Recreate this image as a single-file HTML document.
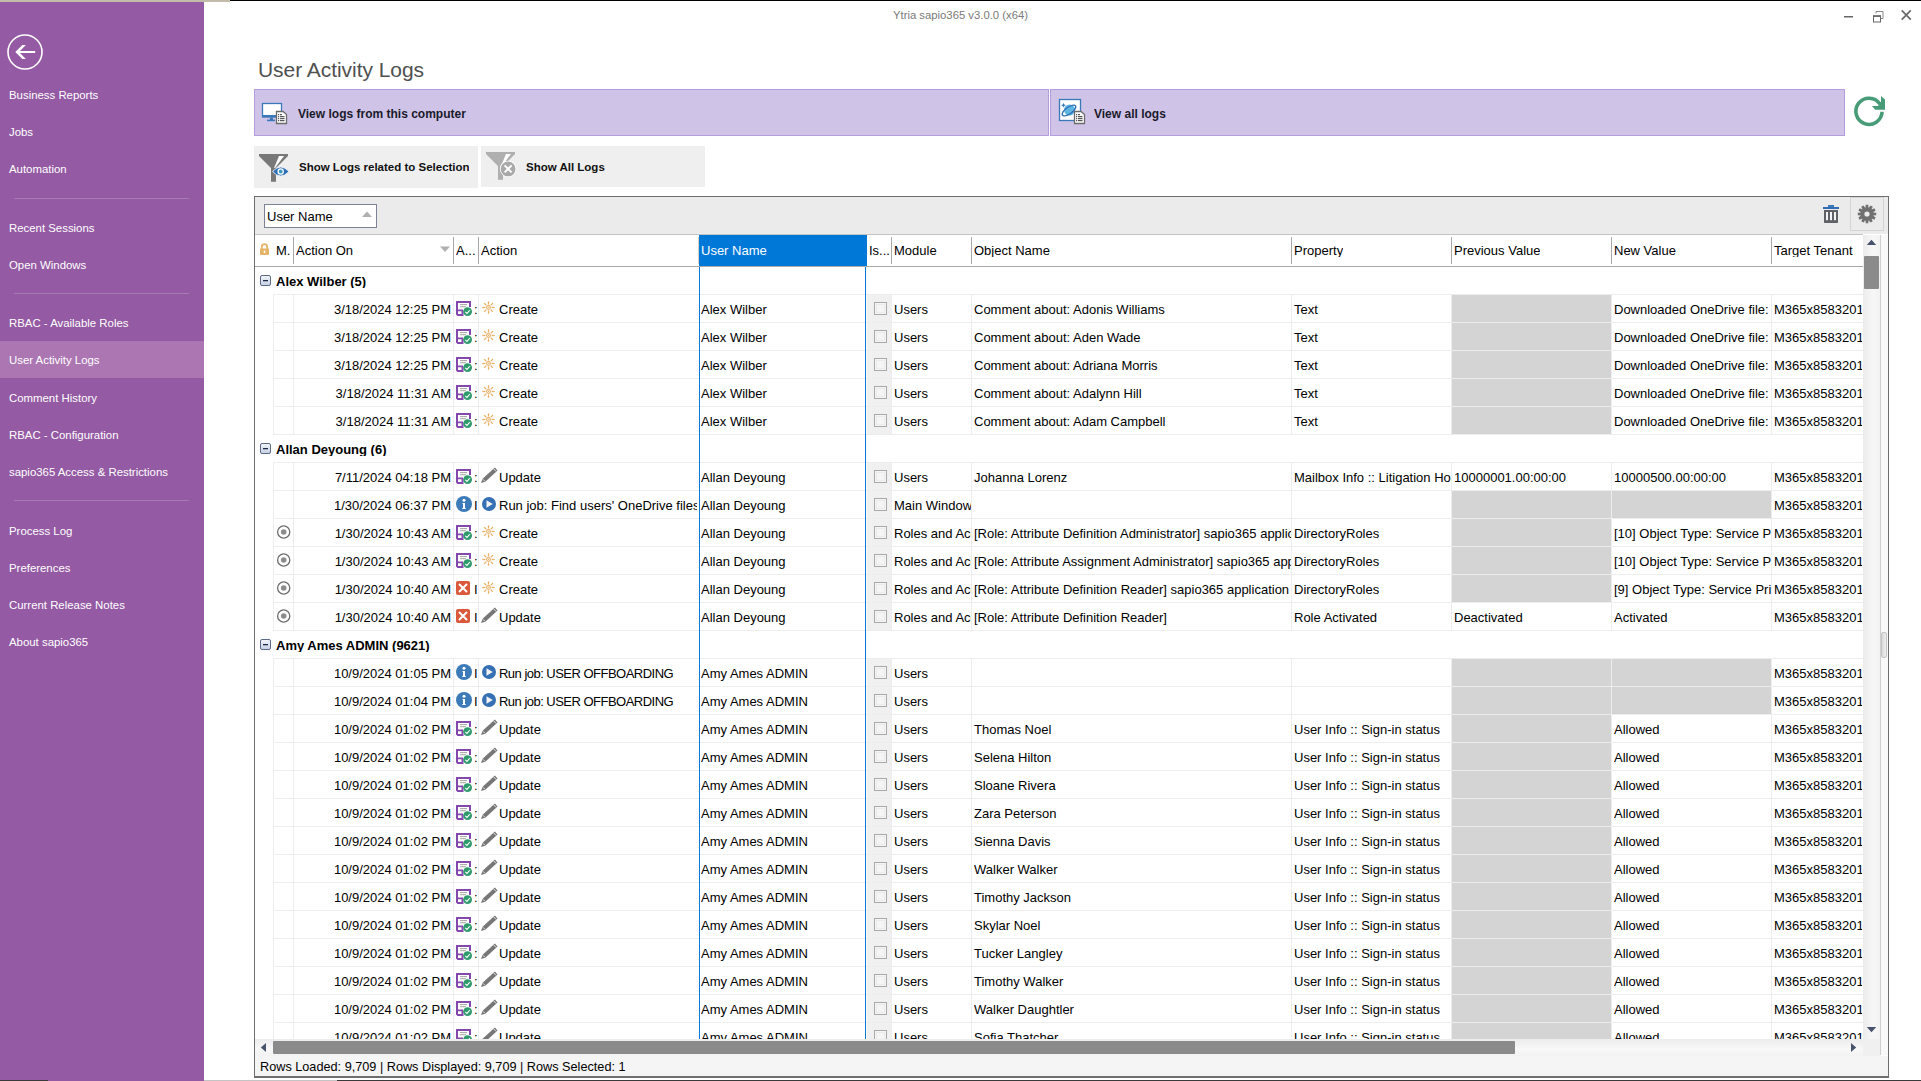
<!DOCTYPE html><html><head><meta charset="utf-8"><style>
*{margin:0;padding:0;box-sizing:border-box}
html,body{width:1921px;height:1081px;overflow:hidden;background:#fff;font-family:"Liberation Sans",sans-serif;position:relative}
.ab{position:absolute}
.t{position:absolute;white-space:nowrap;line-height:1}
.side{position:absolute;left:0;top:2px;width:204px;height:1079px;background:#945aa3}
.si{position:absolute;left:9px;color:#fff;font-size:11.4px;white-space:nowrap;line-height:1}
.sep{position:absolute;left:14px;width:175px;height:1px;background:#a57bb4}
.g{position:absolute;white-space:nowrap;line-height:1;font-size:13px;color:#000;overflow:hidden}
</style></head><body>

<div class="ab" style="left:0;top:0;width:230px;height:2px;background:#c2bba9"></div>
<div class="ab" style="left:230px;top:0;width:1691px;height:1px;background:#000"></div>
<div class="side"></div>
<div class="ab" style="left:0;top:341px;width:204px;height:37px;background:#ab76b2"></div>
<div class="si" style="top:90px">Business Reports</div>
<div class="si" style="top:127px">Jobs</div>
<div class="si" style="top:164px">Automation</div>
<div class="si" style="top:223px">Recent Sessions</div>
<div class="si" style="top:260px">Open Windows</div>
<div class="si" style="top:318px">RBAC - Available Roles</div>
<div class="si" style="top:355px">User Activity Logs</div>
<div class="si" style="top:393px">Comment History</div>
<div class="si" style="top:430px">RBAC - Configuration</div>
<div class="si" style="top:467px">sapio365 Access &amp; Restrictions</div>
<div class="si" style="top:526px">Process Log</div>
<div class="si" style="top:563px">Preferences</div>
<div class="si" style="top:600px">Current Release Notes</div>
<div class="si" style="top:637px">About sapio365</div>
<div class="sep" style="top:198px"></div>
<div class="sep" style="top:293px"></div>
<div class="sep" style="top:500px"></div>
<svg class="ab" style="left:7px;top:34px" width="36" height="36" viewBox="0 0 36 36"><circle cx="18" cy="18" r="17" fill="none" stroke="#fff" stroke-width="1.6"/><path d="M8.3 18 L15.4 11.1 H18.9 L13 17 H28.2 V19 H13 L18.9 24.9 H15.4 Z" fill="#fff"/></svg>
<div class="t" style="left:893px;top:10px;font-size:11.3px;color:#7a7a7a">Ytria sapio365 v3.0.0 (x64)</div>
<svg class="ab" style="left:1840px;top:6px" width="81" height="20"><rect x="4" y="10" width="9" height="1.5" fill="#666"/>
<rect x="33.5" y="10" width="7" height="6" fill="none" stroke="#666" stroke-width="1"/><rect x="33" y="9.3" width="8" height="1.6" fill="#666"/><path d="M36 7.5 V5.5 H43 V12.5 H41" fill="none" stroke="#888" stroke-width="1"/>
<path d="M61.7 4.3 L70.8 13.6 M70.8 4.3 L61.7 13.6" stroke="#6a6a6a" stroke-width="1.7"/></svg>
<div class="t" style="left:258px;top:59px;font-size:21px;letter-spacing:-0.05px;color:#505050">User Activity Logs</div>
<div class="ab" style="left:254px;top:89px;width:795px;height:47px;background:#cfc4e8;border:1px solid #b49ddc"></div>
<div class="ab" style="left:1050px;top:89px;width:795px;height:47px;background:#cfc4e8;border:1px solid #b49ddc"></div>
<svg class="ab" style="left:0;top:0;overflow:visible" width="1" height="1"><rect x="262.5" y="103.5" width="19" height="13" fill="#fff" stroke="#3a78b8" stroke-width="1.3"/><rect x="262" y="115" width="20" height="2.6" fill="#3a78b8"/><rect x="270" y="117.5" width="3" height="2.5" fill="#3a78b8"/><rect x="267" y="119.6" width="8" height="1.6" fill="#3a78b8"/><path d="M276.5 111.5 H283 L286.5 114.5 V123.5 H276.5 Z" fill="#fff" stroke="#6b6b6b" stroke-width="1.3"/><rect x="278" y="114" width="1.2" height="1.2" fill="#555"/><rect x="280" y="114" width="2" height="1.2" fill="#555"/><rect x="278" y="116" width="1.2" height="1.2" fill="#555"/><rect x="280" y="116" width="4.5" height="1.2" fill="#555"/><rect x="278" y="118" width="1.2" height="1.2" fill="#555"/><rect x="280" y="118" width="4.5" height="1.2" fill="#555"/><rect x="278" y="120" width="1.2" height="1.2" fill="#555"/><rect x="280" y="120" width="4.5" height="1.2" fill="#555"/><rect x="1059.5" y="99.5" width="21" height="21" fill="#fff" stroke="#3a78b8" stroke-width="1.3"/><circle cx="1069.5" cy="110" r="5.5" fill="#5db5e0"/><ellipse cx="1069" cy="110.5" rx="8" ry="3.3" transform="rotate(-35 1069 110.5)" fill="none" stroke="#3070b8" stroke-width="1.4"/><path d="M1063.5 103 l0.8 1.5 1.5 0.8 -1.5 0.8 -0.8 1.5 -0.8 -1.5 -1.5 -0.8 1.5 -0.8z" fill="#3a78b8"/><path d="M1074.5 111.5 H1081 L1084.5 114.5 V123.5 H1074.5 Z" fill="#fff" stroke="#6b6b6b" stroke-width="1.3"/><rect x="1076" y="114" width="1.2" height="1.2" fill="#555"/><rect x="1078" y="114" width="2" height="1.2" fill="#555"/><rect x="1076" y="116" width="1.2" height="1.2" fill="#555"/><rect x="1078" y="116" width="4.5" height="1.2" fill="#555"/><rect x="1076" y="118" width="1.2" height="1.2" fill="#555"/><rect x="1078" y="118" width="4.5" height="1.2" fill="#555"/><rect x="1076" y="120" width="1.2" height="1.2" fill="#555"/><rect x="1078" y="120" width="4.5" height="1.2" fill="#555"/></svg>
<div class="t" style="left:298px;top:108px;font-size:12px;font-weight:bold;color:#1a1a2a">View logs from this computer</div>
<div class="t" style="left:1094px;top:108px;font-size:12px;font-weight:bold;color:#1a1a2a">View all logs</div>
<svg class="ab" style="left:1850px;top:92px" width="40" height="40"><path d="M32.1 19.8 A13.1 13.1 0 1 1 29.9 12" fill="none" stroke="#479c77" stroke-width="3.6"/><path d="M31 3.9 L35 7.4 V17.8 H25.2 L21.9 14.1 H28 L31 9.5 Z" fill="#479c77"/></svg>
<div class="ab" style="left:254px;top:146px;width:224px;height:42px;background:#efefef"></div>
<div class="ab" style="left:481px;top:146px;width:224px;height:41px;background:#efefef"></div>
<svg class="ab" style="left:0;top:0;overflow:visible" width="1" height="1"><path d="M259 154 H288 V156 L276 168 V181.7 H271 V168 L259 156 Z" fill="#787878"/><path d="M279 156 H284 L275 168 L274 168 Z" fill="#fff"/><path d="M272.5 171.5 Q280.7 162.5 289 171.5 Q280.7 180.5 272.5 171.5 Z" fill="#2f6fb5" stroke="#fff" stroke-width="0.8"/><circle cx="280.7" cy="171.5" r="3.2" fill="#fff"/><circle cx="280.7" cy="171.5" r="1.9" fill="#3d9ac0"/><path d="M486 152 H515 V154 L503 166 V179.8 H498 V166 L486 154 Z" fill="#afafaf"/><path d="M506 154 H511 L502 166 L501 166 Z" fill="#fff"/><circle cx="508.1" cy="168.9" r="8.2" fill="#fff"/><circle cx="508.1" cy="168.9" r="7.4" fill="#a9a9a9"/><path d="M504.6 165.4 L511.6 172.4 M511.6 165.4 L504.6 172.4" stroke="#fff" stroke-width="2"/></svg>
<div class="t" style="left:299px;top:162px;font-size:11.5px;font-weight:bold;color:#111;width:170px;overflow:hidden">Show Logs related to Selection</div>
<div class="t" style="left:526px;top:162px;font-size:11.5px;font-weight:bold;color:#111">Show All Logs</div>
<div class="ab" style="left:254px;top:196px;width:1635px;height:882px;border:1px solid #6e6e6e;background:#fff"></div>
<div class="ab" style="left:255px;top:197px;width:1633px;height:37px;background:#ebebeb"></div>
<div class="ab" style="left:255px;top:234px;width:1608px;height:1px;background:#c4c4c4"></div>
<div class="ab" style="left:264px;top:204px;width:113px;height:24px;border:1px solid #7b8394;background:#fff"></div>
<div class="g" style="left:267px;top:210px">User Name</div>
<svg class="ab" style="left:360px;top:209px" width="14" height="10"><path d="M2 8 L7 2.5 L12 8 Z" fill="#b0b0b0"/></svg>
<svg class="ab" style="left:1820px;top:203px" width="22" height="22"><rect x="3" y="4" width="16" height="2" fill="#2f6db5"/><rect x="8" y="2" width="6" height="2.2" fill="#3a78b8"/><path d="M4 7 H18 V19.2 Q18 20 17.2 20 H4.8 Q4 20 4 19.2 Z" fill="#606167"/><rect x="6" y="9" width="2" height="8.2" fill="#f4f4f4"/><rect x="10" y="9" width="2" height="8.2" fill="#f4f4f4"/><rect x="14" y="9" width="2" height="8.2" fill="#f4f4f4"/></svg>
<div class="ab" style="left:1850px;top:197px;width:34px;height:34px;border:1px solid #d4d4d4;background:#ebebeb"></div>
<svg class="ab" style="left:1856px;top:203px" width="22" height="22" viewBox="-11 -11 22 22"><circle r="6.6" fill="#707070"/><path d="M-1.3 -9.2 H1.3 L1.6 -5 H-1.6 Z" fill="#707070" transform="rotate(0)"/><path d="M-1.3 -9.2 H1.3 L1.6 -5 H-1.6 Z" fill="#707070" transform="rotate(30)"/><path d="M-1.3 -9.2 H1.3 L1.6 -5 H-1.6 Z" fill="#707070" transform="rotate(60)"/><path d="M-1.3 -9.2 H1.3 L1.6 -5 H-1.6 Z" fill="#707070" transform="rotate(90)"/><path d="M-1.3 -9.2 H1.3 L1.6 -5 H-1.6 Z" fill="#707070" transform="rotate(120)"/><path d="M-1.3 -9.2 H1.3 L1.6 -5 H-1.6 Z" fill="#707070" transform="rotate(150)"/><path d="M-1.3 -9.2 H1.3 L1.6 -5 H-1.6 Z" fill="#707070" transform="rotate(180)"/><path d="M-1.3 -9.2 H1.3 L1.6 -5 H-1.6 Z" fill="#707070" transform="rotate(210)"/><path d="M-1.3 -9.2 H1.3 L1.6 -5 H-1.6 Z" fill="#707070" transform="rotate(240)"/><path d="M-1.3 -9.2 H1.3 L1.6 -5 H-1.6 Z" fill="#707070" transform="rotate(270)"/><path d="M-1.3 -9.2 H1.3 L1.6 -5 H-1.6 Z" fill="#707070" transform="rotate(300)"/><path d="M-1.3 -9.2 H1.3 L1.6 -5 H-1.6 Z" fill="#707070" transform="rotate(330)"/><circle r="2.6" fill="#ebebeb"/></svg>
<div class="ab" style="left:255px;top:266px;width:1608px;height:1px;background:#a9a9a9"></div>
<svg class="ab" style="left:259px;top:243px" width="12" height="13"><path d="M2.8 6 V3.8 A2.7 2.7 0 0 1 8.2 3.8 V6" fill="none" stroke="#e6b468" stroke-width="1.8"/><rect x="1" y="5.5" width="9" height="6.5" rx="0.8" fill="#e6b468"/><rect x="4.8" y="7.5" width="1.4" height="2.5" fill="#fff"/></svg>
<div class="g" style="left:276px;top:244px">M.</div>
<div class="ab" style="left:699px;top:235px;width:168px;height:31px;background:#0078d7"></div>
<div class="ab" style="left:293px;top:237px;width:1px;height:27px;background:#a8a8a8"></div>
<div class="g" style="left:296px;top:244px;color:#000">Action On</div>
<div class="ab" style="left:453px;top:237px;width:1px;height:27px;background:#a8a8a8"></div>
<div class="g" style="left:456px;top:244px;color:#000">A...</div>
<div class="ab" style="left:478px;top:237px;width:1px;height:27px;background:#a8a8a8"></div>
<div class="g" style="left:481px;top:244px;color:#000">Action</div>
<div class="ab" style="left:698px;top:237px;width:1px;height:27px;background:#d8cfc8"></div>
<div class="g" style="left:701px;top:244px;color:#fff">User Name</div>
<div class="g" style="left:869px;top:244px;color:#000">Is...</div>
<div class="ab" style="left:891px;top:237px;width:1px;height:27px;background:#a8a8a8"></div>
<div class="g" style="left:894px;top:244px;color:#000">Module</div>
<div class="ab" style="left:971px;top:237px;width:1px;height:27px;background:#a8a8a8"></div>
<div class="g" style="left:974px;top:244px;color:#000">Object Name</div>
<div class="ab" style="left:1291px;top:237px;width:1px;height:27px;background:#a8a8a8"></div>
<div class="g" style="left:1294px;top:244px;color:#000">Property</div>
<div class="ab" style="left:1451px;top:237px;width:1px;height:27px;background:#a8a8a8"></div>
<div class="g" style="left:1454px;top:244px;color:#000">Previous Value</div>
<div class="ab" style="left:1611px;top:237px;width:1px;height:27px;background:#a8a8a8"></div>
<div class="g" style="left:1614px;top:244px;color:#000">New Value</div>
<div class="ab" style="left:1771px;top:237px;width:1px;height:27px;background:#a8a8a8"></div>
<div class="g" style="left:1774px;top:244px;color:#000">Target Tenant</div>
<svg class="ab" style="left:438px;top:244px" width="14" height="10"><path d="M2 2.5 L7 8 L12 2.5 Z" fill="#b0b0b0"/></svg>
<div class="ab" style="left:273px;top:294px;width:1590px;height:1px;background:#ededed"></div>
<svg class="ab" style="left:260px;top:275px" width="12" height="12"><defs><linearGradient id="eg0" x1="0" y1="0" x2="0" y2="1"><stop offset="0" stop-color="#f4f6fb"/><stop offset="1" stop-color="#c6cfe4"/></linearGradient></defs><rect x="0.5" y="0.5" width="10" height="10" rx="1.5" fill="url(#eg0)" stroke="#5c6a86"/><rect x="3" y="5" width="5" height="1.3" fill="#1d2b4a"/></svg>
<div class="g" style="left:276px;top:275px;font-weight:bold">Alex Wilber (5)</div>
<div class="ab" style="left:273px;top:322px;width:1590px;height:1px;background:#ededed"></div>
<div class="ab" style="left:867px;top:295px;width:24px;height:27px;background:#f0f0f0"></div>
<div class="ab" style="left:1452px;top:295px;width:159px;height:27px;background:#d4d4d4"></div>
<div class="ab" style="left:273px;top:295px;width:1px;height:28px;background:#ededed"></div>
<div class="ab" style="left:293px;top:295px;width:1px;height:28px;background:#ededed"></div>
<div class="ab" style="left:453px;top:295px;width:1px;height:28px;background:#ededed"></div>
<div class="ab" style="left:478px;top:295px;width:1px;height:28px;background:#ededed"></div>
<div class="ab" style="left:891px;top:295px;width:1px;height:28px;background:#ededed"></div>
<div class="ab" style="left:971px;top:295px;width:1px;height:28px;background:#ededed"></div>
<div class="ab" style="left:1291px;top:295px;width:1px;height:28px;background:#ededed"></div>
<div class="ab" style="left:1451px;top:295px;width:1px;height:28px;background:#ededed"></div>
<div class="ab" style="left:1611px;top:295px;width:1px;height:28px;background:#ededed"></div>
<div class="ab" style="left:1771px;top:295px;width:1px;height:28px;background:#ededed"></div>
<div class="g" style="left:294px;top:303px;width:157px;height:16px;text-align:right">3/18/2024 12:25 PM</div>
<div class="g" style="left:474px;top:303px;width:3px;height:16px;">:</div>
<div class="g" style="left:499px;top:303px;width:198px;height:16px;">Create</div>
<div class="g" style="left:701px;top:303px;width:164px;height:16px;">Alex Wilber</div>
<div class="g" style="left:894px;top:303px;width:77px;height:16px;">Users</div>
<div class="g" style="left:974px;top:303px;width:317px;height:16px;">Comment about: Adonis Williams</div>
<div class="g" style="left:1294px;top:303px;width:157px;height:16px;">Text</div>
<div class="g" style="left:1614px;top:303px;width:157px;height:16px;">Downloaded OneDrive file:</div>
<div class="g" style="left:1774px;top:303px;width:88px;height:16px;">M365x8583201.onmicrosoft.com</div>
<div class="ab" style="left:273px;top:350px;width:1590px;height:1px;background:#ededed"></div>
<div class="ab" style="left:867px;top:323px;width:24px;height:27px;background:#f0f0f0"></div>
<div class="ab" style="left:1452px;top:323px;width:159px;height:27px;background:#d4d4d4"></div>
<div class="ab" style="left:273px;top:323px;width:1px;height:28px;background:#ededed"></div>
<div class="ab" style="left:293px;top:323px;width:1px;height:28px;background:#ededed"></div>
<div class="ab" style="left:453px;top:323px;width:1px;height:28px;background:#ededed"></div>
<div class="ab" style="left:478px;top:323px;width:1px;height:28px;background:#ededed"></div>
<div class="ab" style="left:891px;top:323px;width:1px;height:28px;background:#ededed"></div>
<div class="ab" style="left:971px;top:323px;width:1px;height:28px;background:#ededed"></div>
<div class="ab" style="left:1291px;top:323px;width:1px;height:28px;background:#ededed"></div>
<div class="ab" style="left:1451px;top:323px;width:1px;height:28px;background:#ededed"></div>
<div class="ab" style="left:1611px;top:323px;width:1px;height:28px;background:#ededed"></div>
<div class="ab" style="left:1771px;top:323px;width:1px;height:28px;background:#ededed"></div>
<div class="g" style="left:294px;top:331px;width:157px;height:16px;text-align:right">3/18/2024 12:25 PM</div>
<div class="g" style="left:474px;top:331px;width:3px;height:16px;">:</div>
<div class="g" style="left:499px;top:331px;width:198px;height:16px;">Create</div>
<div class="g" style="left:701px;top:331px;width:164px;height:16px;">Alex Wilber</div>
<div class="g" style="left:894px;top:331px;width:77px;height:16px;">Users</div>
<div class="g" style="left:974px;top:331px;width:317px;height:16px;">Comment about: Aden Wade</div>
<div class="g" style="left:1294px;top:331px;width:157px;height:16px;">Text</div>
<div class="g" style="left:1614px;top:331px;width:157px;height:16px;">Downloaded OneDrive file:</div>
<div class="g" style="left:1774px;top:331px;width:88px;height:16px;">M365x8583201.onmicrosoft.com</div>
<div class="ab" style="left:273px;top:378px;width:1590px;height:1px;background:#ededed"></div>
<div class="ab" style="left:867px;top:351px;width:24px;height:27px;background:#f0f0f0"></div>
<div class="ab" style="left:1452px;top:351px;width:159px;height:27px;background:#d4d4d4"></div>
<div class="ab" style="left:273px;top:351px;width:1px;height:28px;background:#ededed"></div>
<div class="ab" style="left:293px;top:351px;width:1px;height:28px;background:#ededed"></div>
<div class="ab" style="left:453px;top:351px;width:1px;height:28px;background:#ededed"></div>
<div class="ab" style="left:478px;top:351px;width:1px;height:28px;background:#ededed"></div>
<div class="ab" style="left:891px;top:351px;width:1px;height:28px;background:#ededed"></div>
<div class="ab" style="left:971px;top:351px;width:1px;height:28px;background:#ededed"></div>
<div class="ab" style="left:1291px;top:351px;width:1px;height:28px;background:#ededed"></div>
<div class="ab" style="left:1451px;top:351px;width:1px;height:28px;background:#ededed"></div>
<div class="ab" style="left:1611px;top:351px;width:1px;height:28px;background:#ededed"></div>
<div class="ab" style="left:1771px;top:351px;width:1px;height:28px;background:#ededed"></div>
<div class="g" style="left:294px;top:359px;width:157px;height:16px;text-align:right">3/18/2024 12:25 PM</div>
<div class="g" style="left:474px;top:359px;width:3px;height:16px;">:</div>
<div class="g" style="left:499px;top:359px;width:198px;height:16px;">Create</div>
<div class="g" style="left:701px;top:359px;width:164px;height:16px;">Alex Wilber</div>
<div class="g" style="left:894px;top:359px;width:77px;height:16px;">Users</div>
<div class="g" style="left:974px;top:359px;width:317px;height:16px;">Comment about: Adriana Morris</div>
<div class="g" style="left:1294px;top:359px;width:157px;height:16px;">Text</div>
<div class="g" style="left:1614px;top:359px;width:157px;height:16px;">Downloaded OneDrive file:</div>
<div class="g" style="left:1774px;top:359px;width:88px;height:16px;">M365x8583201.onmicrosoft.com</div>
<div class="ab" style="left:273px;top:406px;width:1590px;height:1px;background:#ededed"></div>
<div class="ab" style="left:867px;top:379px;width:24px;height:27px;background:#f0f0f0"></div>
<div class="ab" style="left:1452px;top:379px;width:159px;height:27px;background:#d4d4d4"></div>
<div class="ab" style="left:273px;top:379px;width:1px;height:28px;background:#ededed"></div>
<div class="ab" style="left:293px;top:379px;width:1px;height:28px;background:#ededed"></div>
<div class="ab" style="left:453px;top:379px;width:1px;height:28px;background:#ededed"></div>
<div class="ab" style="left:478px;top:379px;width:1px;height:28px;background:#ededed"></div>
<div class="ab" style="left:891px;top:379px;width:1px;height:28px;background:#ededed"></div>
<div class="ab" style="left:971px;top:379px;width:1px;height:28px;background:#ededed"></div>
<div class="ab" style="left:1291px;top:379px;width:1px;height:28px;background:#ededed"></div>
<div class="ab" style="left:1451px;top:379px;width:1px;height:28px;background:#ededed"></div>
<div class="ab" style="left:1611px;top:379px;width:1px;height:28px;background:#ededed"></div>
<div class="ab" style="left:1771px;top:379px;width:1px;height:28px;background:#ededed"></div>
<div class="g" style="left:294px;top:387px;width:157px;height:16px;text-align:right">3/18/2024 11:31 AM</div>
<div class="g" style="left:474px;top:387px;width:3px;height:16px;">:</div>
<div class="g" style="left:499px;top:387px;width:198px;height:16px;">Create</div>
<div class="g" style="left:701px;top:387px;width:164px;height:16px;">Alex Wilber</div>
<div class="g" style="left:894px;top:387px;width:77px;height:16px;">Users</div>
<div class="g" style="left:974px;top:387px;width:317px;height:16px;">Comment about: Adalynn Hill</div>
<div class="g" style="left:1294px;top:387px;width:157px;height:16px;">Text</div>
<div class="g" style="left:1614px;top:387px;width:157px;height:16px;">Downloaded OneDrive file:</div>
<div class="g" style="left:1774px;top:387px;width:88px;height:16px;">M365x8583201.onmicrosoft.com</div>
<div class="ab" style="left:273px;top:434px;width:1590px;height:1px;background:#ededed"></div>
<div class="ab" style="left:867px;top:407px;width:24px;height:27px;background:#f0f0f0"></div>
<div class="ab" style="left:1452px;top:407px;width:159px;height:27px;background:#d4d4d4"></div>
<div class="ab" style="left:273px;top:407px;width:1px;height:28px;background:#ededed"></div>
<div class="ab" style="left:293px;top:407px;width:1px;height:28px;background:#ededed"></div>
<div class="ab" style="left:453px;top:407px;width:1px;height:28px;background:#ededed"></div>
<div class="ab" style="left:478px;top:407px;width:1px;height:28px;background:#ededed"></div>
<div class="ab" style="left:891px;top:407px;width:1px;height:28px;background:#ededed"></div>
<div class="ab" style="left:971px;top:407px;width:1px;height:28px;background:#ededed"></div>
<div class="ab" style="left:1291px;top:407px;width:1px;height:28px;background:#ededed"></div>
<div class="ab" style="left:1451px;top:407px;width:1px;height:28px;background:#ededed"></div>
<div class="ab" style="left:1611px;top:407px;width:1px;height:28px;background:#ededed"></div>
<div class="ab" style="left:1771px;top:407px;width:1px;height:28px;background:#ededed"></div>
<div class="g" style="left:294px;top:415px;width:157px;height:16px;text-align:right">3/18/2024 11:31 AM</div>
<div class="g" style="left:474px;top:415px;width:3px;height:16px;">:</div>
<div class="g" style="left:499px;top:415px;width:198px;height:16px;">Create</div>
<div class="g" style="left:701px;top:415px;width:164px;height:16px;">Alex Wilber</div>
<div class="g" style="left:894px;top:415px;width:77px;height:16px;">Users</div>
<div class="g" style="left:974px;top:415px;width:317px;height:16px;">Comment about: Adam Campbell</div>
<div class="g" style="left:1294px;top:415px;width:157px;height:16px;">Text</div>
<div class="g" style="left:1614px;top:415px;width:157px;height:16px;">Downloaded OneDrive file:</div>
<div class="g" style="left:1774px;top:415px;width:88px;height:16px;">M365x8583201.onmicrosoft.com</div>
<div class="ab" style="left:273px;top:462px;width:1590px;height:1px;background:#ededed"></div>
<svg class="ab" style="left:260px;top:443px" width="12" height="12"><defs><linearGradient id="eg6" x1="0" y1="0" x2="0" y2="1"><stop offset="0" stop-color="#f4f6fb"/><stop offset="1" stop-color="#c6cfe4"/></linearGradient></defs><rect x="0.5" y="0.5" width="10" height="10" rx="1.5" fill="url(#eg6)" stroke="#5c6a86"/><rect x="3" y="5" width="5" height="1.3" fill="#1d2b4a"/></svg>
<div class="g" style="left:276px;top:443px;font-weight:bold">Allan Deyoung (6)</div>
<div class="ab" style="left:273px;top:490px;width:1590px;height:1px;background:#ededed"></div>
<div class="ab" style="left:867px;top:463px;width:24px;height:27px;background:#f0f0f0"></div>
<div class="ab" style="left:273px;top:463px;width:1px;height:28px;background:#ededed"></div>
<div class="ab" style="left:293px;top:463px;width:1px;height:28px;background:#ededed"></div>
<div class="ab" style="left:453px;top:463px;width:1px;height:28px;background:#ededed"></div>
<div class="ab" style="left:478px;top:463px;width:1px;height:28px;background:#ededed"></div>
<div class="ab" style="left:891px;top:463px;width:1px;height:28px;background:#ededed"></div>
<div class="ab" style="left:971px;top:463px;width:1px;height:28px;background:#ededed"></div>
<div class="ab" style="left:1291px;top:463px;width:1px;height:28px;background:#ededed"></div>
<div class="ab" style="left:1451px;top:463px;width:1px;height:28px;background:#ededed"></div>
<div class="ab" style="left:1611px;top:463px;width:1px;height:28px;background:#ededed"></div>
<div class="ab" style="left:1771px;top:463px;width:1px;height:28px;background:#ededed"></div>
<div class="g" style="left:294px;top:471px;width:157px;height:16px;text-align:right">7/11/2024 04:18 PM</div>
<div class="g" style="left:474px;top:471px;width:3px;height:16px;">:</div>
<div class="g" style="left:499px;top:471px;width:198px;height:16px;">Update</div>
<div class="g" style="left:701px;top:471px;width:164px;height:16px;">Allan Deyoung</div>
<div class="g" style="left:894px;top:471px;width:77px;height:16px;">Users</div>
<div class="g" style="left:974px;top:471px;width:317px;height:16px;">Johanna Lorenz</div>
<div class="g" style="left:1294px;top:471px;width:157px;height:16px;">Mailbox Info :: Litigation Hold Duration</div>
<div class="g" style="left:1454px;top:471px;width:157px;height:16px;">10000001.00:00:00</div>
<div class="g" style="left:1614px;top:471px;width:157px;height:16px;">10000500.00:00:00</div>
<div class="g" style="left:1774px;top:471px;width:88px;height:16px;">M365x8583201.onmicrosoft.com</div>
<div class="ab" style="left:273px;top:518px;width:1590px;height:1px;background:#ededed"></div>
<div class="ab" style="left:867px;top:491px;width:24px;height:27px;background:#f0f0f0"></div>
<div class="ab" style="left:1452px;top:491px;width:159px;height:27px;background:#d4d4d4"></div>
<div class="ab" style="left:1612px;top:491px;width:159px;height:27px;background:#d4d4d4"></div>
<div class="ab" style="left:273px;top:491px;width:1px;height:28px;background:#ededed"></div>
<div class="ab" style="left:293px;top:491px;width:1px;height:28px;background:#ededed"></div>
<div class="ab" style="left:453px;top:491px;width:1px;height:28px;background:#ededed"></div>
<div class="ab" style="left:478px;top:491px;width:1px;height:28px;background:#ededed"></div>
<div class="ab" style="left:891px;top:491px;width:1px;height:28px;background:#ededed"></div>
<div class="ab" style="left:971px;top:491px;width:1px;height:28px;background:#ededed"></div>
<div class="ab" style="left:1291px;top:491px;width:1px;height:28px;background:#ededed"></div>
<div class="ab" style="left:1451px;top:491px;width:1px;height:28px;background:#ededed"></div>
<div class="ab" style="left:1611px;top:491px;width:1px;height:28px;background:#ededed"></div>
<div class="ab" style="left:1771px;top:491px;width:1px;height:28px;background:#ededed"></div>
<div class="g" style="left:294px;top:499px;width:157px;height:16px;text-align:right">1/30/2024 06:37 PM</div>
<div class="g" style="left:474px;top:499px;width:3px;height:16px;">I</div>
<div class="g" style="left:499px;top:499px;width:198px;height:16px;">Run job: Find users' OneDrive files</div>
<div class="g" style="left:701px;top:499px;width:164px;height:16px;">Allan Deyoung</div>
<div class="g" style="left:894px;top:499px;width:77px;height:16px;">Main Window</div>
<div class="g" style="left:1774px;top:499px;width:88px;height:16px;">M365x8583201.onmicrosoft.com</div>
<div class="ab" style="left:273px;top:546px;width:1590px;height:1px;background:#ededed"></div>
<div class="ab" style="left:867px;top:519px;width:24px;height:27px;background:#f0f0f0"></div>
<div class="ab" style="left:1452px;top:519px;width:159px;height:27px;background:#d4d4d4"></div>
<div class="ab" style="left:273px;top:519px;width:1px;height:28px;background:#ededed"></div>
<div class="ab" style="left:293px;top:519px;width:1px;height:28px;background:#ededed"></div>
<div class="ab" style="left:453px;top:519px;width:1px;height:28px;background:#ededed"></div>
<div class="ab" style="left:478px;top:519px;width:1px;height:28px;background:#ededed"></div>
<div class="ab" style="left:891px;top:519px;width:1px;height:28px;background:#ededed"></div>
<div class="ab" style="left:971px;top:519px;width:1px;height:28px;background:#ededed"></div>
<div class="ab" style="left:1291px;top:519px;width:1px;height:28px;background:#ededed"></div>
<div class="ab" style="left:1451px;top:519px;width:1px;height:28px;background:#ededed"></div>
<div class="ab" style="left:1611px;top:519px;width:1px;height:28px;background:#ededed"></div>
<div class="ab" style="left:1771px;top:519px;width:1px;height:28px;background:#ededed"></div>
<div class="g" style="left:294px;top:527px;width:157px;height:16px;text-align:right">1/30/2024 10:43 AM</div>
<div class="g" style="left:474px;top:527px;width:3px;height:16px;">:</div>
<div class="g" style="left:499px;top:527px;width:198px;height:16px;">Create</div>
<div class="g" style="left:701px;top:527px;width:164px;height:16px;">Allan Deyoung</div>
<div class="g" style="left:894px;top:527px;width:77px;height:16px;">Roles and Access</div>
<div class="g" style="left:974px;top:527px;width:317px;height:16px;">[Role: Attribute Definition Administrator] sapio365 application</div>
<div class="g" style="left:1294px;top:527px;width:157px;height:16px;">DirectoryRoles</div>
<div class="g" style="left:1614px;top:527px;width:157px;height:16px;">[10] Object Type: Service Principal</div>
<div class="g" style="left:1774px;top:527px;width:88px;height:16px;">M365x8583201.onmicrosoft.com</div>
<div class="ab" style="left:273px;top:574px;width:1590px;height:1px;background:#ededed"></div>
<div class="ab" style="left:867px;top:547px;width:24px;height:27px;background:#f0f0f0"></div>
<div class="ab" style="left:1452px;top:547px;width:159px;height:27px;background:#d4d4d4"></div>
<div class="ab" style="left:273px;top:547px;width:1px;height:28px;background:#ededed"></div>
<div class="ab" style="left:293px;top:547px;width:1px;height:28px;background:#ededed"></div>
<div class="ab" style="left:453px;top:547px;width:1px;height:28px;background:#ededed"></div>
<div class="ab" style="left:478px;top:547px;width:1px;height:28px;background:#ededed"></div>
<div class="ab" style="left:891px;top:547px;width:1px;height:28px;background:#ededed"></div>
<div class="ab" style="left:971px;top:547px;width:1px;height:28px;background:#ededed"></div>
<div class="ab" style="left:1291px;top:547px;width:1px;height:28px;background:#ededed"></div>
<div class="ab" style="left:1451px;top:547px;width:1px;height:28px;background:#ededed"></div>
<div class="ab" style="left:1611px;top:547px;width:1px;height:28px;background:#ededed"></div>
<div class="ab" style="left:1771px;top:547px;width:1px;height:28px;background:#ededed"></div>
<div class="g" style="left:294px;top:555px;width:157px;height:16px;text-align:right">1/30/2024 10:43 AM</div>
<div class="g" style="left:474px;top:555px;width:3px;height:16px;">:</div>
<div class="g" style="left:499px;top:555px;width:198px;height:16px;">Create</div>
<div class="g" style="left:701px;top:555px;width:164px;height:16px;">Allan Deyoung</div>
<div class="g" style="left:894px;top:555px;width:77px;height:16px;">Roles and Access</div>
<div class="g" style="left:974px;top:555px;width:317px;height:16px;">[Role: Attribute Assignment Administrator] sapio365 application</div>
<div class="g" style="left:1294px;top:555px;width:157px;height:16px;">DirectoryRoles</div>
<div class="g" style="left:1614px;top:555px;width:157px;height:16px;">[10] Object Type: Service Principal</div>
<div class="g" style="left:1774px;top:555px;width:88px;height:16px;">M365x8583201.onmicrosoft.com</div>
<div class="ab" style="left:273px;top:602px;width:1590px;height:1px;background:#ededed"></div>
<div class="ab" style="left:867px;top:575px;width:24px;height:27px;background:#f0f0f0"></div>
<div class="ab" style="left:1452px;top:575px;width:159px;height:27px;background:#d4d4d4"></div>
<div class="ab" style="left:273px;top:575px;width:1px;height:28px;background:#ededed"></div>
<div class="ab" style="left:293px;top:575px;width:1px;height:28px;background:#ededed"></div>
<div class="ab" style="left:453px;top:575px;width:1px;height:28px;background:#ededed"></div>
<div class="ab" style="left:478px;top:575px;width:1px;height:28px;background:#ededed"></div>
<div class="ab" style="left:891px;top:575px;width:1px;height:28px;background:#ededed"></div>
<div class="ab" style="left:971px;top:575px;width:1px;height:28px;background:#ededed"></div>
<div class="ab" style="left:1291px;top:575px;width:1px;height:28px;background:#ededed"></div>
<div class="ab" style="left:1451px;top:575px;width:1px;height:28px;background:#ededed"></div>
<div class="ab" style="left:1611px;top:575px;width:1px;height:28px;background:#ededed"></div>
<div class="ab" style="left:1771px;top:575px;width:1px;height:28px;background:#ededed"></div>
<div class="g" style="left:294px;top:583px;width:157px;height:16px;text-align:right">1/30/2024 10:40 AM</div>
<div class="g" style="left:474px;top:583px;width:3px;height:16px;">I</div>
<div class="g" style="left:499px;top:583px;width:198px;height:16px;">Create</div>
<div class="g" style="left:701px;top:583px;width:164px;height:16px;">Allan Deyoung</div>
<div class="g" style="left:894px;top:583px;width:77px;height:16px;">Roles and Access</div>
<div class="g" style="left:974px;top:583px;width:317px;height:16px;">[Role: Attribute Definition Reader] sapio365 application</div>
<div class="g" style="left:1294px;top:583px;width:157px;height:16px;">DirectoryRoles</div>
<div class="g" style="left:1614px;top:583px;width:157px;height:16px;">[9] Object Type: Service Principal</div>
<div class="g" style="left:1774px;top:583px;width:88px;height:16px;">M365x8583201.onmicrosoft.com</div>
<div class="ab" style="left:273px;top:630px;width:1590px;height:1px;background:#ededed"></div>
<div class="ab" style="left:867px;top:603px;width:24px;height:27px;background:#f0f0f0"></div>
<div class="ab" style="left:273px;top:603px;width:1px;height:28px;background:#ededed"></div>
<div class="ab" style="left:293px;top:603px;width:1px;height:28px;background:#ededed"></div>
<div class="ab" style="left:453px;top:603px;width:1px;height:28px;background:#ededed"></div>
<div class="ab" style="left:478px;top:603px;width:1px;height:28px;background:#ededed"></div>
<div class="ab" style="left:891px;top:603px;width:1px;height:28px;background:#ededed"></div>
<div class="ab" style="left:971px;top:603px;width:1px;height:28px;background:#ededed"></div>
<div class="ab" style="left:1291px;top:603px;width:1px;height:28px;background:#ededed"></div>
<div class="ab" style="left:1451px;top:603px;width:1px;height:28px;background:#ededed"></div>
<div class="ab" style="left:1611px;top:603px;width:1px;height:28px;background:#ededed"></div>
<div class="ab" style="left:1771px;top:603px;width:1px;height:28px;background:#ededed"></div>
<div class="g" style="left:294px;top:611px;width:157px;height:16px;text-align:right">1/30/2024 10:40 AM</div>
<div class="g" style="left:474px;top:611px;width:3px;height:16px;">I</div>
<div class="g" style="left:499px;top:611px;width:198px;height:16px;">Update</div>
<div class="g" style="left:701px;top:611px;width:164px;height:16px;">Allan Deyoung</div>
<div class="g" style="left:894px;top:611px;width:77px;height:16px;">Roles and Access</div>
<div class="g" style="left:974px;top:611px;width:317px;height:16px;">[Role: Attribute Definition Reader]</div>
<div class="g" style="left:1294px;top:611px;width:157px;height:16px;">Role Activated</div>
<div class="g" style="left:1454px;top:611px;width:157px;height:16px;">Deactivated</div>
<div class="g" style="left:1614px;top:611px;width:157px;height:16px;">Activated</div>
<div class="g" style="left:1774px;top:611px;width:88px;height:16px;">M365x8583201.onmicrosoft.com</div>
<div class="ab" style="left:273px;top:658px;width:1590px;height:1px;background:#ededed"></div>
<svg class="ab" style="left:260px;top:639px" width="12" height="12"><defs><linearGradient id="eg13" x1="0" y1="0" x2="0" y2="1"><stop offset="0" stop-color="#f4f6fb"/><stop offset="1" stop-color="#c6cfe4"/></linearGradient></defs><rect x="0.5" y="0.5" width="10" height="10" rx="1.5" fill="url(#eg13)" stroke="#5c6a86"/><rect x="3" y="5" width="5" height="1.3" fill="#1d2b4a"/></svg>
<div class="g" style="left:276px;top:639px;font-weight:bold">Amy Ames ADMIN (9621)</div>
<div class="ab" style="left:273px;top:686px;width:1590px;height:1px;background:#ededed"></div>
<div class="ab" style="left:867px;top:659px;width:24px;height:27px;background:#f0f0f0"></div>
<div class="ab" style="left:1452px;top:659px;width:159px;height:27px;background:#d4d4d4"></div>
<div class="ab" style="left:1612px;top:659px;width:159px;height:27px;background:#d4d4d4"></div>
<div class="ab" style="left:273px;top:659px;width:1px;height:28px;background:#ededed"></div>
<div class="ab" style="left:293px;top:659px;width:1px;height:28px;background:#ededed"></div>
<div class="ab" style="left:453px;top:659px;width:1px;height:28px;background:#ededed"></div>
<div class="ab" style="left:478px;top:659px;width:1px;height:28px;background:#ededed"></div>
<div class="ab" style="left:891px;top:659px;width:1px;height:28px;background:#ededed"></div>
<div class="ab" style="left:971px;top:659px;width:1px;height:28px;background:#ededed"></div>
<div class="ab" style="left:1291px;top:659px;width:1px;height:28px;background:#ededed"></div>
<div class="ab" style="left:1451px;top:659px;width:1px;height:28px;background:#ededed"></div>
<div class="ab" style="left:1611px;top:659px;width:1px;height:28px;background:#ededed"></div>
<div class="ab" style="left:1771px;top:659px;width:1px;height:28px;background:#ededed"></div>
<div class="g" style="left:294px;top:667px;width:157px;height:16px;text-align:right">10/9/2024 01:05 PM</div>
<div class="g" style="left:474px;top:667px;width:3px;height:16px;">I</div>
<div class="g" style="left:499px;top:667px;width:198px;height:16px;letter-spacing:-0.52px">Run job: USER OFFBOARDING</div>
<div class="g" style="left:701px;top:667px;width:164px;height:16px;">Amy Ames ADMIN</div>
<div class="g" style="left:894px;top:667px;width:77px;height:16px;">Users</div>
<div class="g" style="left:1774px;top:667px;width:88px;height:16px;">M365x8583201.onmicrosoft.com</div>
<div class="ab" style="left:273px;top:714px;width:1590px;height:1px;background:#ededed"></div>
<div class="ab" style="left:867px;top:687px;width:24px;height:27px;background:#f0f0f0"></div>
<div class="ab" style="left:1452px;top:687px;width:159px;height:27px;background:#d4d4d4"></div>
<div class="ab" style="left:1612px;top:687px;width:159px;height:27px;background:#d4d4d4"></div>
<div class="ab" style="left:273px;top:687px;width:1px;height:28px;background:#ededed"></div>
<div class="ab" style="left:293px;top:687px;width:1px;height:28px;background:#ededed"></div>
<div class="ab" style="left:453px;top:687px;width:1px;height:28px;background:#ededed"></div>
<div class="ab" style="left:478px;top:687px;width:1px;height:28px;background:#ededed"></div>
<div class="ab" style="left:891px;top:687px;width:1px;height:28px;background:#ededed"></div>
<div class="ab" style="left:971px;top:687px;width:1px;height:28px;background:#ededed"></div>
<div class="ab" style="left:1291px;top:687px;width:1px;height:28px;background:#ededed"></div>
<div class="ab" style="left:1451px;top:687px;width:1px;height:28px;background:#ededed"></div>
<div class="ab" style="left:1611px;top:687px;width:1px;height:28px;background:#ededed"></div>
<div class="ab" style="left:1771px;top:687px;width:1px;height:28px;background:#ededed"></div>
<div class="g" style="left:294px;top:695px;width:157px;height:16px;text-align:right">10/9/2024 01:04 PM</div>
<div class="g" style="left:474px;top:695px;width:3px;height:16px;">I</div>
<div class="g" style="left:499px;top:695px;width:198px;height:16px;letter-spacing:-0.52px">Run job: USER OFFBOARDING</div>
<div class="g" style="left:701px;top:695px;width:164px;height:16px;">Amy Ames ADMIN</div>
<div class="g" style="left:894px;top:695px;width:77px;height:16px;">Users</div>
<div class="g" style="left:1774px;top:695px;width:88px;height:16px;">M365x8583201.onmicrosoft.com</div>
<div class="ab" style="left:273px;top:742px;width:1590px;height:1px;background:#ededed"></div>
<div class="ab" style="left:867px;top:715px;width:24px;height:27px;background:#f0f0f0"></div>
<div class="ab" style="left:1452px;top:715px;width:159px;height:27px;background:#d4d4d4"></div>
<div class="ab" style="left:273px;top:715px;width:1px;height:28px;background:#ededed"></div>
<div class="ab" style="left:293px;top:715px;width:1px;height:28px;background:#ededed"></div>
<div class="ab" style="left:453px;top:715px;width:1px;height:28px;background:#ededed"></div>
<div class="ab" style="left:478px;top:715px;width:1px;height:28px;background:#ededed"></div>
<div class="ab" style="left:891px;top:715px;width:1px;height:28px;background:#ededed"></div>
<div class="ab" style="left:971px;top:715px;width:1px;height:28px;background:#ededed"></div>
<div class="ab" style="left:1291px;top:715px;width:1px;height:28px;background:#ededed"></div>
<div class="ab" style="left:1451px;top:715px;width:1px;height:28px;background:#ededed"></div>
<div class="ab" style="left:1611px;top:715px;width:1px;height:28px;background:#ededed"></div>
<div class="ab" style="left:1771px;top:715px;width:1px;height:28px;background:#ededed"></div>
<div class="g" style="left:294px;top:723px;width:157px;height:16px;text-align:right">10/9/2024 01:02 PM</div>
<div class="g" style="left:474px;top:723px;width:3px;height:16px;">:</div>
<div class="g" style="left:499px;top:723px;width:198px;height:16px;">Update</div>
<div class="g" style="left:701px;top:723px;width:164px;height:16px;">Amy Ames ADMIN</div>
<div class="g" style="left:894px;top:723px;width:77px;height:16px;">Users</div>
<div class="g" style="left:974px;top:723px;width:317px;height:16px;">Thomas Noel</div>
<div class="g" style="left:1294px;top:723px;width:157px;height:16px;">User Info :: Sign-in status</div>
<div class="g" style="left:1614px;top:723px;width:157px;height:16px;">Allowed</div>
<div class="g" style="left:1774px;top:723px;width:88px;height:16px;">M365x8583201.onmicrosoft.com</div>
<div class="ab" style="left:273px;top:770px;width:1590px;height:1px;background:#ededed"></div>
<div class="ab" style="left:867px;top:743px;width:24px;height:27px;background:#f0f0f0"></div>
<div class="ab" style="left:1452px;top:743px;width:159px;height:27px;background:#d4d4d4"></div>
<div class="ab" style="left:273px;top:743px;width:1px;height:28px;background:#ededed"></div>
<div class="ab" style="left:293px;top:743px;width:1px;height:28px;background:#ededed"></div>
<div class="ab" style="left:453px;top:743px;width:1px;height:28px;background:#ededed"></div>
<div class="ab" style="left:478px;top:743px;width:1px;height:28px;background:#ededed"></div>
<div class="ab" style="left:891px;top:743px;width:1px;height:28px;background:#ededed"></div>
<div class="ab" style="left:971px;top:743px;width:1px;height:28px;background:#ededed"></div>
<div class="ab" style="left:1291px;top:743px;width:1px;height:28px;background:#ededed"></div>
<div class="ab" style="left:1451px;top:743px;width:1px;height:28px;background:#ededed"></div>
<div class="ab" style="left:1611px;top:743px;width:1px;height:28px;background:#ededed"></div>
<div class="ab" style="left:1771px;top:743px;width:1px;height:28px;background:#ededed"></div>
<div class="g" style="left:294px;top:751px;width:157px;height:16px;text-align:right">10/9/2024 01:02 PM</div>
<div class="g" style="left:474px;top:751px;width:3px;height:16px;">:</div>
<div class="g" style="left:499px;top:751px;width:198px;height:16px;">Update</div>
<div class="g" style="left:701px;top:751px;width:164px;height:16px;">Amy Ames ADMIN</div>
<div class="g" style="left:894px;top:751px;width:77px;height:16px;">Users</div>
<div class="g" style="left:974px;top:751px;width:317px;height:16px;">Selena Hilton</div>
<div class="g" style="left:1294px;top:751px;width:157px;height:16px;">User Info :: Sign-in status</div>
<div class="g" style="left:1614px;top:751px;width:157px;height:16px;">Allowed</div>
<div class="g" style="left:1774px;top:751px;width:88px;height:16px;">M365x8583201.onmicrosoft.com</div>
<div class="ab" style="left:273px;top:798px;width:1590px;height:1px;background:#ededed"></div>
<div class="ab" style="left:867px;top:771px;width:24px;height:27px;background:#f0f0f0"></div>
<div class="ab" style="left:1452px;top:771px;width:159px;height:27px;background:#d4d4d4"></div>
<div class="ab" style="left:273px;top:771px;width:1px;height:28px;background:#ededed"></div>
<div class="ab" style="left:293px;top:771px;width:1px;height:28px;background:#ededed"></div>
<div class="ab" style="left:453px;top:771px;width:1px;height:28px;background:#ededed"></div>
<div class="ab" style="left:478px;top:771px;width:1px;height:28px;background:#ededed"></div>
<div class="ab" style="left:891px;top:771px;width:1px;height:28px;background:#ededed"></div>
<div class="ab" style="left:971px;top:771px;width:1px;height:28px;background:#ededed"></div>
<div class="ab" style="left:1291px;top:771px;width:1px;height:28px;background:#ededed"></div>
<div class="ab" style="left:1451px;top:771px;width:1px;height:28px;background:#ededed"></div>
<div class="ab" style="left:1611px;top:771px;width:1px;height:28px;background:#ededed"></div>
<div class="ab" style="left:1771px;top:771px;width:1px;height:28px;background:#ededed"></div>
<div class="g" style="left:294px;top:779px;width:157px;height:16px;text-align:right">10/9/2024 01:02 PM</div>
<div class="g" style="left:474px;top:779px;width:3px;height:16px;">:</div>
<div class="g" style="left:499px;top:779px;width:198px;height:16px;">Update</div>
<div class="g" style="left:701px;top:779px;width:164px;height:16px;">Amy Ames ADMIN</div>
<div class="g" style="left:894px;top:779px;width:77px;height:16px;">Users</div>
<div class="g" style="left:974px;top:779px;width:317px;height:16px;">Sloane Rivera</div>
<div class="g" style="left:1294px;top:779px;width:157px;height:16px;">User Info :: Sign-in status</div>
<div class="g" style="left:1614px;top:779px;width:157px;height:16px;">Allowed</div>
<div class="g" style="left:1774px;top:779px;width:88px;height:16px;">M365x8583201.onmicrosoft.com</div>
<div class="ab" style="left:273px;top:826px;width:1590px;height:1px;background:#ededed"></div>
<div class="ab" style="left:867px;top:799px;width:24px;height:27px;background:#f0f0f0"></div>
<div class="ab" style="left:1452px;top:799px;width:159px;height:27px;background:#d4d4d4"></div>
<div class="ab" style="left:273px;top:799px;width:1px;height:28px;background:#ededed"></div>
<div class="ab" style="left:293px;top:799px;width:1px;height:28px;background:#ededed"></div>
<div class="ab" style="left:453px;top:799px;width:1px;height:28px;background:#ededed"></div>
<div class="ab" style="left:478px;top:799px;width:1px;height:28px;background:#ededed"></div>
<div class="ab" style="left:891px;top:799px;width:1px;height:28px;background:#ededed"></div>
<div class="ab" style="left:971px;top:799px;width:1px;height:28px;background:#ededed"></div>
<div class="ab" style="left:1291px;top:799px;width:1px;height:28px;background:#ededed"></div>
<div class="ab" style="left:1451px;top:799px;width:1px;height:28px;background:#ededed"></div>
<div class="ab" style="left:1611px;top:799px;width:1px;height:28px;background:#ededed"></div>
<div class="ab" style="left:1771px;top:799px;width:1px;height:28px;background:#ededed"></div>
<div class="g" style="left:294px;top:807px;width:157px;height:16px;text-align:right">10/9/2024 01:02 PM</div>
<div class="g" style="left:474px;top:807px;width:3px;height:16px;">:</div>
<div class="g" style="left:499px;top:807px;width:198px;height:16px;">Update</div>
<div class="g" style="left:701px;top:807px;width:164px;height:16px;">Amy Ames ADMIN</div>
<div class="g" style="left:894px;top:807px;width:77px;height:16px;">Users</div>
<div class="g" style="left:974px;top:807px;width:317px;height:16px;">Zara Peterson</div>
<div class="g" style="left:1294px;top:807px;width:157px;height:16px;">User Info :: Sign-in status</div>
<div class="g" style="left:1614px;top:807px;width:157px;height:16px;">Allowed</div>
<div class="g" style="left:1774px;top:807px;width:88px;height:16px;">M365x8583201.onmicrosoft.com</div>
<div class="ab" style="left:273px;top:854px;width:1590px;height:1px;background:#ededed"></div>
<div class="ab" style="left:867px;top:827px;width:24px;height:27px;background:#f0f0f0"></div>
<div class="ab" style="left:1452px;top:827px;width:159px;height:27px;background:#d4d4d4"></div>
<div class="ab" style="left:273px;top:827px;width:1px;height:28px;background:#ededed"></div>
<div class="ab" style="left:293px;top:827px;width:1px;height:28px;background:#ededed"></div>
<div class="ab" style="left:453px;top:827px;width:1px;height:28px;background:#ededed"></div>
<div class="ab" style="left:478px;top:827px;width:1px;height:28px;background:#ededed"></div>
<div class="ab" style="left:891px;top:827px;width:1px;height:28px;background:#ededed"></div>
<div class="ab" style="left:971px;top:827px;width:1px;height:28px;background:#ededed"></div>
<div class="ab" style="left:1291px;top:827px;width:1px;height:28px;background:#ededed"></div>
<div class="ab" style="left:1451px;top:827px;width:1px;height:28px;background:#ededed"></div>
<div class="ab" style="left:1611px;top:827px;width:1px;height:28px;background:#ededed"></div>
<div class="ab" style="left:1771px;top:827px;width:1px;height:28px;background:#ededed"></div>
<div class="g" style="left:294px;top:835px;width:157px;height:16px;text-align:right">10/9/2024 01:02 PM</div>
<div class="g" style="left:474px;top:835px;width:3px;height:16px;">:</div>
<div class="g" style="left:499px;top:835px;width:198px;height:16px;">Update</div>
<div class="g" style="left:701px;top:835px;width:164px;height:16px;">Amy Ames ADMIN</div>
<div class="g" style="left:894px;top:835px;width:77px;height:16px;">Users</div>
<div class="g" style="left:974px;top:835px;width:317px;height:16px;">Sienna Davis</div>
<div class="g" style="left:1294px;top:835px;width:157px;height:16px;">User Info :: Sign-in status</div>
<div class="g" style="left:1614px;top:835px;width:157px;height:16px;">Allowed</div>
<div class="g" style="left:1774px;top:835px;width:88px;height:16px;">M365x8583201.onmicrosoft.com</div>
<div class="ab" style="left:273px;top:882px;width:1590px;height:1px;background:#ededed"></div>
<div class="ab" style="left:867px;top:855px;width:24px;height:27px;background:#f0f0f0"></div>
<div class="ab" style="left:1452px;top:855px;width:159px;height:27px;background:#d4d4d4"></div>
<div class="ab" style="left:273px;top:855px;width:1px;height:28px;background:#ededed"></div>
<div class="ab" style="left:293px;top:855px;width:1px;height:28px;background:#ededed"></div>
<div class="ab" style="left:453px;top:855px;width:1px;height:28px;background:#ededed"></div>
<div class="ab" style="left:478px;top:855px;width:1px;height:28px;background:#ededed"></div>
<div class="ab" style="left:891px;top:855px;width:1px;height:28px;background:#ededed"></div>
<div class="ab" style="left:971px;top:855px;width:1px;height:28px;background:#ededed"></div>
<div class="ab" style="left:1291px;top:855px;width:1px;height:28px;background:#ededed"></div>
<div class="ab" style="left:1451px;top:855px;width:1px;height:28px;background:#ededed"></div>
<div class="ab" style="left:1611px;top:855px;width:1px;height:28px;background:#ededed"></div>
<div class="ab" style="left:1771px;top:855px;width:1px;height:28px;background:#ededed"></div>
<div class="g" style="left:294px;top:863px;width:157px;height:16px;text-align:right">10/9/2024 01:02 PM</div>
<div class="g" style="left:474px;top:863px;width:3px;height:16px;">:</div>
<div class="g" style="left:499px;top:863px;width:198px;height:16px;">Update</div>
<div class="g" style="left:701px;top:863px;width:164px;height:16px;">Amy Ames ADMIN</div>
<div class="g" style="left:894px;top:863px;width:77px;height:16px;">Users</div>
<div class="g" style="left:974px;top:863px;width:317px;height:16px;">Walker Walker</div>
<div class="g" style="left:1294px;top:863px;width:157px;height:16px;">User Info :: Sign-in status</div>
<div class="g" style="left:1614px;top:863px;width:157px;height:16px;">Allowed</div>
<div class="g" style="left:1774px;top:863px;width:88px;height:16px;">M365x8583201.onmicrosoft.com</div>
<div class="ab" style="left:273px;top:910px;width:1590px;height:1px;background:#ededed"></div>
<div class="ab" style="left:867px;top:883px;width:24px;height:27px;background:#f0f0f0"></div>
<div class="ab" style="left:1452px;top:883px;width:159px;height:27px;background:#d4d4d4"></div>
<div class="ab" style="left:273px;top:883px;width:1px;height:28px;background:#ededed"></div>
<div class="ab" style="left:293px;top:883px;width:1px;height:28px;background:#ededed"></div>
<div class="ab" style="left:453px;top:883px;width:1px;height:28px;background:#ededed"></div>
<div class="ab" style="left:478px;top:883px;width:1px;height:28px;background:#ededed"></div>
<div class="ab" style="left:891px;top:883px;width:1px;height:28px;background:#ededed"></div>
<div class="ab" style="left:971px;top:883px;width:1px;height:28px;background:#ededed"></div>
<div class="ab" style="left:1291px;top:883px;width:1px;height:28px;background:#ededed"></div>
<div class="ab" style="left:1451px;top:883px;width:1px;height:28px;background:#ededed"></div>
<div class="ab" style="left:1611px;top:883px;width:1px;height:28px;background:#ededed"></div>
<div class="ab" style="left:1771px;top:883px;width:1px;height:28px;background:#ededed"></div>
<div class="g" style="left:294px;top:891px;width:157px;height:16px;text-align:right">10/9/2024 01:02 PM</div>
<div class="g" style="left:474px;top:891px;width:3px;height:16px;">:</div>
<div class="g" style="left:499px;top:891px;width:198px;height:16px;">Update</div>
<div class="g" style="left:701px;top:891px;width:164px;height:16px;">Amy Ames ADMIN</div>
<div class="g" style="left:894px;top:891px;width:77px;height:16px;">Users</div>
<div class="g" style="left:974px;top:891px;width:317px;height:16px;">Timothy Jackson</div>
<div class="g" style="left:1294px;top:891px;width:157px;height:16px;">User Info :: Sign-in status</div>
<div class="g" style="left:1614px;top:891px;width:157px;height:16px;">Allowed</div>
<div class="g" style="left:1774px;top:891px;width:88px;height:16px;">M365x8583201.onmicrosoft.com</div>
<div class="ab" style="left:273px;top:938px;width:1590px;height:1px;background:#ededed"></div>
<div class="ab" style="left:867px;top:911px;width:24px;height:27px;background:#f0f0f0"></div>
<div class="ab" style="left:1452px;top:911px;width:159px;height:27px;background:#d4d4d4"></div>
<div class="ab" style="left:273px;top:911px;width:1px;height:28px;background:#ededed"></div>
<div class="ab" style="left:293px;top:911px;width:1px;height:28px;background:#ededed"></div>
<div class="ab" style="left:453px;top:911px;width:1px;height:28px;background:#ededed"></div>
<div class="ab" style="left:478px;top:911px;width:1px;height:28px;background:#ededed"></div>
<div class="ab" style="left:891px;top:911px;width:1px;height:28px;background:#ededed"></div>
<div class="ab" style="left:971px;top:911px;width:1px;height:28px;background:#ededed"></div>
<div class="ab" style="left:1291px;top:911px;width:1px;height:28px;background:#ededed"></div>
<div class="ab" style="left:1451px;top:911px;width:1px;height:28px;background:#ededed"></div>
<div class="ab" style="left:1611px;top:911px;width:1px;height:28px;background:#ededed"></div>
<div class="ab" style="left:1771px;top:911px;width:1px;height:28px;background:#ededed"></div>
<div class="g" style="left:294px;top:919px;width:157px;height:16px;text-align:right">10/9/2024 01:02 PM</div>
<div class="g" style="left:474px;top:919px;width:3px;height:16px;">:</div>
<div class="g" style="left:499px;top:919px;width:198px;height:16px;">Update</div>
<div class="g" style="left:701px;top:919px;width:164px;height:16px;">Amy Ames ADMIN</div>
<div class="g" style="left:894px;top:919px;width:77px;height:16px;">Users</div>
<div class="g" style="left:974px;top:919px;width:317px;height:16px;">Skylar Noel</div>
<div class="g" style="left:1294px;top:919px;width:157px;height:16px;">User Info :: Sign-in status</div>
<div class="g" style="left:1614px;top:919px;width:157px;height:16px;">Allowed</div>
<div class="g" style="left:1774px;top:919px;width:88px;height:16px;">M365x8583201.onmicrosoft.com</div>
<div class="ab" style="left:273px;top:966px;width:1590px;height:1px;background:#ededed"></div>
<div class="ab" style="left:867px;top:939px;width:24px;height:27px;background:#f0f0f0"></div>
<div class="ab" style="left:1452px;top:939px;width:159px;height:27px;background:#d4d4d4"></div>
<div class="ab" style="left:273px;top:939px;width:1px;height:28px;background:#ededed"></div>
<div class="ab" style="left:293px;top:939px;width:1px;height:28px;background:#ededed"></div>
<div class="ab" style="left:453px;top:939px;width:1px;height:28px;background:#ededed"></div>
<div class="ab" style="left:478px;top:939px;width:1px;height:28px;background:#ededed"></div>
<div class="ab" style="left:891px;top:939px;width:1px;height:28px;background:#ededed"></div>
<div class="ab" style="left:971px;top:939px;width:1px;height:28px;background:#ededed"></div>
<div class="ab" style="left:1291px;top:939px;width:1px;height:28px;background:#ededed"></div>
<div class="ab" style="left:1451px;top:939px;width:1px;height:28px;background:#ededed"></div>
<div class="ab" style="left:1611px;top:939px;width:1px;height:28px;background:#ededed"></div>
<div class="ab" style="left:1771px;top:939px;width:1px;height:28px;background:#ededed"></div>
<div class="g" style="left:294px;top:947px;width:157px;height:16px;text-align:right">10/9/2024 01:02 PM</div>
<div class="g" style="left:474px;top:947px;width:3px;height:16px;">:</div>
<div class="g" style="left:499px;top:947px;width:198px;height:16px;">Update</div>
<div class="g" style="left:701px;top:947px;width:164px;height:16px;">Amy Ames ADMIN</div>
<div class="g" style="left:894px;top:947px;width:77px;height:16px;">Users</div>
<div class="g" style="left:974px;top:947px;width:317px;height:16px;">Tucker Langley</div>
<div class="g" style="left:1294px;top:947px;width:157px;height:16px;">User Info :: Sign-in status</div>
<div class="g" style="left:1614px;top:947px;width:157px;height:16px;">Allowed</div>
<div class="g" style="left:1774px;top:947px;width:88px;height:16px;">M365x8583201.onmicrosoft.com</div>
<div class="ab" style="left:273px;top:994px;width:1590px;height:1px;background:#ededed"></div>
<div class="ab" style="left:867px;top:967px;width:24px;height:27px;background:#f0f0f0"></div>
<div class="ab" style="left:1452px;top:967px;width:159px;height:27px;background:#d4d4d4"></div>
<div class="ab" style="left:273px;top:967px;width:1px;height:28px;background:#ededed"></div>
<div class="ab" style="left:293px;top:967px;width:1px;height:28px;background:#ededed"></div>
<div class="ab" style="left:453px;top:967px;width:1px;height:28px;background:#ededed"></div>
<div class="ab" style="left:478px;top:967px;width:1px;height:28px;background:#ededed"></div>
<div class="ab" style="left:891px;top:967px;width:1px;height:28px;background:#ededed"></div>
<div class="ab" style="left:971px;top:967px;width:1px;height:28px;background:#ededed"></div>
<div class="ab" style="left:1291px;top:967px;width:1px;height:28px;background:#ededed"></div>
<div class="ab" style="left:1451px;top:967px;width:1px;height:28px;background:#ededed"></div>
<div class="ab" style="left:1611px;top:967px;width:1px;height:28px;background:#ededed"></div>
<div class="ab" style="left:1771px;top:967px;width:1px;height:28px;background:#ededed"></div>
<div class="g" style="left:294px;top:975px;width:157px;height:16px;text-align:right">10/9/2024 01:02 PM</div>
<div class="g" style="left:474px;top:975px;width:3px;height:16px;">:</div>
<div class="g" style="left:499px;top:975px;width:198px;height:16px;">Update</div>
<div class="g" style="left:701px;top:975px;width:164px;height:16px;">Amy Ames ADMIN</div>
<div class="g" style="left:894px;top:975px;width:77px;height:16px;">Users</div>
<div class="g" style="left:974px;top:975px;width:317px;height:16px;">Timothy Walker</div>
<div class="g" style="left:1294px;top:975px;width:157px;height:16px;">User Info :: Sign-in status</div>
<div class="g" style="left:1614px;top:975px;width:157px;height:16px;">Allowed</div>
<div class="g" style="left:1774px;top:975px;width:88px;height:16px;">M365x8583201.onmicrosoft.com</div>
<div class="ab" style="left:273px;top:1022px;width:1590px;height:1px;background:#ededed"></div>
<div class="ab" style="left:867px;top:995px;width:24px;height:27px;background:#f0f0f0"></div>
<div class="ab" style="left:1452px;top:995px;width:159px;height:27px;background:#d4d4d4"></div>
<div class="ab" style="left:273px;top:995px;width:1px;height:28px;background:#ededed"></div>
<div class="ab" style="left:293px;top:995px;width:1px;height:28px;background:#ededed"></div>
<div class="ab" style="left:453px;top:995px;width:1px;height:28px;background:#ededed"></div>
<div class="ab" style="left:478px;top:995px;width:1px;height:28px;background:#ededed"></div>
<div class="ab" style="left:891px;top:995px;width:1px;height:28px;background:#ededed"></div>
<div class="ab" style="left:971px;top:995px;width:1px;height:28px;background:#ededed"></div>
<div class="ab" style="left:1291px;top:995px;width:1px;height:28px;background:#ededed"></div>
<div class="ab" style="left:1451px;top:995px;width:1px;height:28px;background:#ededed"></div>
<div class="ab" style="left:1611px;top:995px;width:1px;height:28px;background:#ededed"></div>
<div class="ab" style="left:1771px;top:995px;width:1px;height:28px;background:#ededed"></div>
<div class="g" style="left:294px;top:1003px;width:157px;height:16px;text-align:right">10/9/2024 01:02 PM</div>
<div class="g" style="left:474px;top:1003px;width:3px;height:16px;">:</div>
<div class="g" style="left:499px;top:1003px;width:198px;height:16px;">Update</div>
<div class="g" style="left:701px;top:1003px;width:164px;height:16px;">Amy Ames ADMIN</div>
<div class="g" style="left:894px;top:1003px;width:77px;height:16px;">Users</div>
<div class="g" style="left:974px;top:1003px;width:317px;height:16px;">Walker Daughtler</div>
<div class="g" style="left:1294px;top:1003px;width:157px;height:16px;">User Info :: Sign-in status</div>
<div class="g" style="left:1614px;top:1003px;width:157px;height:16px;">Allowed</div>
<div class="g" style="left:1774px;top:1003px;width:88px;height:16px;">M365x8583201.onmicrosoft.com</div>
<div class="ab" style="left:867px;top:1023px;width:24px;height:16px;background:#f0f0f0"></div>
<div class="ab" style="left:1452px;top:1023px;width:159px;height:16px;background:#d4d4d4"></div>
<div class="ab" style="left:273px;top:1023px;width:1px;height:16px;background:#ededed"></div>
<div class="ab" style="left:293px;top:1023px;width:1px;height:16px;background:#ededed"></div>
<div class="ab" style="left:453px;top:1023px;width:1px;height:16px;background:#ededed"></div>
<div class="ab" style="left:478px;top:1023px;width:1px;height:16px;background:#ededed"></div>
<div class="ab" style="left:891px;top:1023px;width:1px;height:16px;background:#ededed"></div>
<div class="ab" style="left:971px;top:1023px;width:1px;height:16px;background:#ededed"></div>
<div class="ab" style="left:1291px;top:1023px;width:1px;height:16px;background:#ededed"></div>
<div class="ab" style="left:1451px;top:1023px;width:1px;height:16px;background:#ededed"></div>
<div class="ab" style="left:1611px;top:1023px;width:1px;height:16px;background:#ededed"></div>
<div class="ab" style="left:1771px;top:1023px;width:1px;height:16px;background:#ededed"></div>
<div class="g" style="left:294px;top:1031px;width:157px;height:8px;text-align:right">10/9/2024 01:02 PM</div>
<div class="g" style="left:474px;top:1031px;width:3px;height:8px;">:</div>
<div class="g" style="left:499px;top:1031px;width:198px;height:8px;">Update</div>
<div class="g" style="left:701px;top:1031px;width:164px;height:8px;">Amy Ames ADMIN</div>
<div class="g" style="left:894px;top:1031px;width:77px;height:8px;">Users</div>
<div class="g" style="left:974px;top:1031px;width:317px;height:8px;">Sofia Thatcher</div>
<div class="g" style="left:1294px;top:1031px;width:157px;height:8px;">User Info :: Sign-in status</div>
<div class="g" style="left:1614px;top:1031px;width:157px;height:8px;">Allowed</div>
<div class="g" style="left:1774px;top:1031px;width:88px;height:8px;">M365x8583201.onmicrosoft.com</div>
<svg class="ab" style="left:0;top:0;width:1921px;height:1039px;overflow:hidden" width="1921" height="1039"><rect x="874.5" y="302.5" width="12" height="12" fill="#f5f5f5" stroke="#a9a9a9"/><rect x="876.5" y="304.5" width="8" height="8" fill="none" stroke="#eaeaea"/><path d="M456 301 H471 V307 H469 V303 H458 V309.5 H463 V311.2 H463.5 V316 H457.5 L456 314.5 Z M458 311.2 V314 H461.5 V311.2 Z" fill="#8447ae" fill-rule="evenodd"/><rect x="460" y="304.2" width="7" height="0.9" fill="#9a9a9a"/><rect x="460" y="306.3" width="6" height="0.9" fill="#9a9a9a"/><circle cx="467.6" cy="311.6" r="4.4" fill="#2f9b6c"/><path d="M465.3 311.8 L467 313.4 L470 310" fill="none" stroke="#fff" stroke-width="1.1"/><line x1="488.5" y1="307.5" x2="488.5" y2="301.3" stroke="#e6b065" stroke-width="1.3" transform="rotate(0 488.5 307.5)"/><line x1="488.5" y1="307.5" x2="488.5" y2="301.3" stroke="#e6b065" stroke-width="1.3" transform="rotate(45 488.5 307.5)"/><line x1="488.5" y1="307.5" x2="488.5" y2="301.3" stroke="#e6b065" stroke-width="1.3" transform="rotate(90 488.5 307.5)"/><line x1="488.5" y1="307.5" x2="488.5" y2="301.3" stroke="#e6b065" stroke-width="1.3" transform="rotate(135 488.5 307.5)"/><line x1="488.5" y1="307.5" x2="488.5" y2="301.3" stroke="#e6b065" stroke-width="1.3" transform="rotate(180 488.5 307.5)"/><line x1="488.5" y1="307.5" x2="488.5" y2="301.3" stroke="#e6b065" stroke-width="1.3" transform="rotate(225 488.5 307.5)"/><line x1="488.5" y1="307.5" x2="488.5" y2="301.3" stroke="#e6b065" stroke-width="1.3" transform="rotate(270 488.5 307.5)"/><line x1="488.5" y1="307.5" x2="488.5" y2="301.3" stroke="#e6b065" stroke-width="1.3" transform="rotate(315 488.5 307.5)"/><circle cx="488.5" cy="307.5" r="3.1" fill="#fff"/><circle cx="488.5" cy="307.5" r="1.9" fill="none" stroke="#e6b065" stroke-width="1.1"/><circle cx="488.5" cy="307.5" r="0.6" fill="#e6b065"/><rect x="874.5" y="330.5" width="12" height="12" fill="#f5f5f5" stroke="#a9a9a9"/><rect x="876.5" y="332.5" width="8" height="8" fill="none" stroke="#eaeaea"/><path d="M456 329 H471 V335 H469 V331 H458 V337.5 H463 V339.2 H463.5 V344 H457.5 L456 342.5 Z M458 339.2 V342 H461.5 V339.2 Z" fill="#8447ae" fill-rule="evenodd"/><rect x="460" y="332.2" width="7" height="0.9" fill="#9a9a9a"/><rect x="460" y="334.3" width="6" height="0.9" fill="#9a9a9a"/><circle cx="467.6" cy="339.6" r="4.4" fill="#2f9b6c"/><path d="M465.3 339.8 L467 341.4 L470 338" fill="none" stroke="#fff" stroke-width="1.1"/><line x1="488.5" y1="335.5" x2="488.5" y2="329.3" stroke="#e6b065" stroke-width="1.3" transform="rotate(0 488.5 335.5)"/><line x1="488.5" y1="335.5" x2="488.5" y2="329.3" stroke="#e6b065" stroke-width="1.3" transform="rotate(45 488.5 335.5)"/><line x1="488.5" y1="335.5" x2="488.5" y2="329.3" stroke="#e6b065" stroke-width="1.3" transform="rotate(90 488.5 335.5)"/><line x1="488.5" y1="335.5" x2="488.5" y2="329.3" stroke="#e6b065" stroke-width="1.3" transform="rotate(135 488.5 335.5)"/><line x1="488.5" y1="335.5" x2="488.5" y2="329.3" stroke="#e6b065" stroke-width="1.3" transform="rotate(180 488.5 335.5)"/><line x1="488.5" y1="335.5" x2="488.5" y2="329.3" stroke="#e6b065" stroke-width="1.3" transform="rotate(225 488.5 335.5)"/><line x1="488.5" y1="335.5" x2="488.5" y2="329.3" stroke="#e6b065" stroke-width="1.3" transform="rotate(270 488.5 335.5)"/><line x1="488.5" y1="335.5" x2="488.5" y2="329.3" stroke="#e6b065" stroke-width="1.3" transform="rotate(315 488.5 335.5)"/><circle cx="488.5" cy="335.5" r="3.1" fill="#fff"/><circle cx="488.5" cy="335.5" r="1.9" fill="none" stroke="#e6b065" stroke-width="1.1"/><circle cx="488.5" cy="335.5" r="0.6" fill="#e6b065"/><rect x="874.5" y="358.5" width="12" height="12" fill="#f5f5f5" stroke="#a9a9a9"/><rect x="876.5" y="360.5" width="8" height="8" fill="none" stroke="#eaeaea"/><path d="M456 357 H471 V363 H469 V359 H458 V365.5 H463 V367.2 H463.5 V372 H457.5 L456 370.5 Z M458 367.2 V370 H461.5 V367.2 Z" fill="#8447ae" fill-rule="evenodd"/><rect x="460" y="360.2" width="7" height="0.9" fill="#9a9a9a"/><rect x="460" y="362.3" width="6" height="0.9" fill="#9a9a9a"/><circle cx="467.6" cy="367.6" r="4.4" fill="#2f9b6c"/><path d="M465.3 367.8 L467 369.4 L470 366" fill="none" stroke="#fff" stroke-width="1.1"/><line x1="488.5" y1="363.5" x2="488.5" y2="357.3" stroke="#e6b065" stroke-width="1.3" transform="rotate(0 488.5 363.5)"/><line x1="488.5" y1="363.5" x2="488.5" y2="357.3" stroke="#e6b065" stroke-width="1.3" transform="rotate(45 488.5 363.5)"/><line x1="488.5" y1="363.5" x2="488.5" y2="357.3" stroke="#e6b065" stroke-width="1.3" transform="rotate(90 488.5 363.5)"/><line x1="488.5" y1="363.5" x2="488.5" y2="357.3" stroke="#e6b065" stroke-width="1.3" transform="rotate(135 488.5 363.5)"/><line x1="488.5" y1="363.5" x2="488.5" y2="357.3" stroke="#e6b065" stroke-width="1.3" transform="rotate(180 488.5 363.5)"/><line x1="488.5" y1="363.5" x2="488.5" y2="357.3" stroke="#e6b065" stroke-width="1.3" transform="rotate(225 488.5 363.5)"/><line x1="488.5" y1="363.5" x2="488.5" y2="357.3" stroke="#e6b065" stroke-width="1.3" transform="rotate(270 488.5 363.5)"/><line x1="488.5" y1="363.5" x2="488.5" y2="357.3" stroke="#e6b065" stroke-width="1.3" transform="rotate(315 488.5 363.5)"/><circle cx="488.5" cy="363.5" r="3.1" fill="#fff"/><circle cx="488.5" cy="363.5" r="1.9" fill="none" stroke="#e6b065" stroke-width="1.1"/><circle cx="488.5" cy="363.5" r="0.6" fill="#e6b065"/><rect x="874.5" y="386.5" width="12" height="12" fill="#f5f5f5" stroke="#a9a9a9"/><rect x="876.5" y="388.5" width="8" height="8" fill="none" stroke="#eaeaea"/><path d="M456 385 H471 V391 H469 V387 H458 V393.5 H463 V395.2 H463.5 V400 H457.5 L456 398.5 Z M458 395.2 V398 H461.5 V395.2 Z" fill="#8447ae" fill-rule="evenodd"/><rect x="460" y="388.2" width="7" height="0.9" fill="#9a9a9a"/><rect x="460" y="390.3" width="6" height="0.9" fill="#9a9a9a"/><circle cx="467.6" cy="395.6" r="4.4" fill="#2f9b6c"/><path d="M465.3 395.8 L467 397.4 L470 394" fill="none" stroke="#fff" stroke-width="1.1"/><line x1="488.5" y1="391.5" x2="488.5" y2="385.3" stroke="#e6b065" stroke-width="1.3" transform="rotate(0 488.5 391.5)"/><line x1="488.5" y1="391.5" x2="488.5" y2="385.3" stroke="#e6b065" stroke-width="1.3" transform="rotate(45 488.5 391.5)"/><line x1="488.5" y1="391.5" x2="488.5" y2="385.3" stroke="#e6b065" stroke-width="1.3" transform="rotate(90 488.5 391.5)"/><line x1="488.5" y1="391.5" x2="488.5" y2="385.3" stroke="#e6b065" stroke-width="1.3" transform="rotate(135 488.5 391.5)"/><line x1="488.5" y1="391.5" x2="488.5" y2="385.3" stroke="#e6b065" stroke-width="1.3" transform="rotate(180 488.5 391.5)"/><line x1="488.5" y1="391.5" x2="488.5" y2="385.3" stroke="#e6b065" stroke-width="1.3" transform="rotate(225 488.5 391.5)"/><line x1="488.5" y1="391.5" x2="488.5" y2="385.3" stroke="#e6b065" stroke-width="1.3" transform="rotate(270 488.5 391.5)"/><line x1="488.5" y1="391.5" x2="488.5" y2="385.3" stroke="#e6b065" stroke-width="1.3" transform="rotate(315 488.5 391.5)"/><circle cx="488.5" cy="391.5" r="3.1" fill="#fff"/><circle cx="488.5" cy="391.5" r="1.9" fill="none" stroke="#e6b065" stroke-width="1.1"/><circle cx="488.5" cy="391.5" r="0.6" fill="#e6b065"/><rect x="874.5" y="414.5" width="12" height="12" fill="#f5f5f5" stroke="#a9a9a9"/><rect x="876.5" y="416.5" width="8" height="8" fill="none" stroke="#eaeaea"/><path d="M456 413 H471 V419 H469 V415 H458 V421.5 H463 V423.2 H463.5 V428 H457.5 L456 426.5 Z M458 423.2 V426 H461.5 V423.2 Z" fill="#8447ae" fill-rule="evenodd"/><rect x="460" y="416.2" width="7" height="0.9" fill="#9a9a9a"/><rect x="460" y="418.3" width="6" height="0.9" fill="#9a9a9a"/><circle cx="467.6" cy="423.6" r="4.4" fill="#2f9b6c"/><path d="M465.3 423.8 L467 425.4 L470 422" fill="none" stroke="#fff" stroke-width="1.1"/><line x1="488.5" y1="419.5" x2="488.5" y2="413.3" stroke="#e6b065" stroke-width="1.3" transform="rotate(0 488.5 419.5)"/><line x1="488.5" y1="419.5" x2="488.5" y2="413.3" stroke="#e6b065" stroke-width="1.3" transform="rotate(45 488.5 419.5)"/><line x1="488.5" y1="419.5" x2="488.5" y2="413.3" stroke="#e6b065" stroke-width="1.3" transform="rotate(90 488.5 419.5)"/><line x1="488.5" y1="419.5" x2="488.5" y2="413.3" stroke="#e6b065" stroke-width="1.3" transform="rotate(135 488.5 419.5)"/><line x1="488.5" y1="419.5" x2="488.5" y2="413.3" stroke="#e6b065" stroke-width="1.3" transform="rotate(180 488.5 419.5)"/><line x1="488.5" y1="419.5" x2="488.5" y2="413.3" stroke="#e6b065" stroke-width="1.3" transform="rotate(225 488.5 419.5)"/><line x1="488.5" y1="419.5" x2="488.5" y2="413.3" stroke="#e6b065" stroke-width="1.3" transform="rotate(270 488.5 419.5)"/><line x1="488.5" y1="419.5" x2="488.5" y2="413.3" stroke="#e6b065" stroke-width="1.3" transform="rotate(315 488.5 419.5)"/><circle cx="488.5" cy="419.5" r="3.1" fill="#fff"/><circle cx="488.5" cy="419.5" r="1.9" fill="none" stroke="#e6b065" stroke-width="1.1"/><circle cx="488.5" cy="419.5" r="0.6" fill="#e6b065"/><rect x="874.5" y="470.5" width="12" height="12" fill="#f5f5f5" stroke="#a9a9a9"/><rect x="876.5" y="472.5" width="8" height="8" fill="none" stroke="#eaeaea"/><path d="M456 469 H471 V475 H469 V471 H458 V477.5 H463 V479.2 H463.5 V484 H457.5 L456 482.5 Z M458 479.2 V482 H461.5 V479.2 Z" fill="#8447ae" fill-rule="evenodd"/><rect x="460" y="472.2" width="7" height="0.9" fill="#9a9a9a"/><rect x="460" y="474.3" width="6" height="0.9" fill="#9a9a9a"/><circle cx="467.6" cy="479.6" r="4.4" fill="#2f9b6c"/><path d="M465.3 479.8 L467 481.4 L470 478" fill="none" stroke="#fff" stroke-width="1.1"/><path d="M481 483 L482.6 478.8 L494.85 467.6 L497.55 470.6 L485.3 481.8 Z" fill="#777"/><path d="M483 479.3 L484.9 481.3 M493.6 468.8 L496 471.4" stroke="#fff" stroke-width="0.8"/><rect x="874.5" y="498.5" width="12" height="12" fill="#f5f5f5" stroke="#a9a9a9"/><rect x="876.5" y="500.5" width="8" height="8" fill="none" stroke="#eaeaea"/><circle cx="464" cy="504" r="8" fill="#3d7ab8"/><circle cx="464" cy="500.3" r="1.5" fill="#fff"/><path d="M462.3 503 H465 V508.3 H466 V509 H462 V508.3 H463 V503.7 H462.3 Z" fill="#fff"/><circle cx="489" cy="504" r="7" fill="#3570b4"/><path d="M486.5 500.2 L492.8 504 L486.5 507.8 Z" fill="#f2f2f2"/><circle cx="283.7" cy="532" r="6.1" fill="#fff" stroke="#6e6e6e" stroke-width="1.3"/><circle cx="283.7" cy="532" r="2.8" fill="#8c8c8c"/><rect x="874.5" y="526.5" width="12" height="12" fill="#f5f5f5" stroke="#a9a9a9"/><rect x="876.5" y="528.5" width="8" height="8" fill="none" stroke="#eaeaea"/><path d="M456 525 H471 V531 H469 V527 H458 V533.5 H463 V535.2 H463.5 V540 H457.5 L456 538.5 Z M458 535.2 V538 H461.5 V535.2 Z" fill="#8447ae" fill-rule="evenodd"/><rect x="460" y="528.2" width="7" height="0.9" fill="#9a9a9a"/><rect x="460" y="530.3" width="6" height="0.9" fill="#9a9a9a"/><circle cx="467.6" cy="535.6" r="4.4" fill="#2f9b6c"/><path d="M465.3 535.8 L467 537.4 L470 534" fill="none" stroke="#fff" stroke-width="1.1"/><line x1="488.5" y1="531.5" x2="488.5" y2="525.3" stroke="#e6b065" stroke-width="1.3" transform="rotate(0 488.5 531.5)"/><line x1="488.5" y1="531.5" x2="488.5" y2="525.3" stroke="#e6b065" stroke-width="1.3" transform="rotate(45 488.5 531.5)"/><line x1="488.5" y1="531.5" x2="488.5" y2="525.3" stroke="#e6b065" stroke-width="1.3" transform="rotate(90 488.5 531.5)"/><line x1="488.5" y1="531.5" x2="488.5" y2="525.3" stroke="#e6b065" stroke-width="1.3" transform="rotate(135 488.5 531.5)"/><line x1="488.5" y1="531.5" x2="488.5" y2="525.3" stroke="#e6b065" stroke-width="1.3" transform="rotate(180 488.5 531.5)"/><line x1="488.5" y1="531.5" x2="488.5" y2="525.3" stroke="#e6b065" stroke-width="1.3" transform="rotate(225 488.5 531.5)"/><line x1="488.5" y1="531.5" x2="488.5" y2="525.3" stroke="#e6b065" stroke-width="1.3" transform="rotate(270 488.5 531.5)"/><line x1="488.5" y1="531.5" x2="488.5" y2="525.3" stroke="#e6b065" stroke-width="1.3" transform="rotate(315 488.5 531.5)"/><circle cx="488.5" cy="531.5" r="3.1" fill="#fff"/><circle cx="488.5" cy="531.5" r="1.9" fill="none" stroke="#e6b065" stroke-width="1.1"/><circle cx="488.5" cy="531.5" r="0.6" fill="#e6b065"/><circle cx="283.7" cy="560" r="6.1" fill="#fff" stroke="#6e6e6e" stroke-width="1.3"/><circle cx="283.7" cy="560" r="2.8" fill="#8c8c8c"/><rect x="874.5" y="554.5" width="12" height="12" fill="#f5f5f5" stroke="#a9a9a9"/><rect x="876.5" y="556.5" width="8" height="8" fill="none" stroke="#eaeaea"/><path d="M456 553 H471 V559 H469 V555 H458 V561.5 H463 V563.2 H463.5 V568 H457.5 L456 566.5 Z M458 563.2 V566 H461.5 V563.2 Z" fill="#8447ae" fill-rule="evenodd"/><rect x="460" y="556.2" width="7" height="0.9" fill="#9a9a9a"/><rect x="460" y="558.3" width="6" height="0.9" fill="#9a9a9a"/><circle cx="467.6" cy="563.6" r="4.4" fill="#2f9b6c"/><path d="M465.3 563.8 L467 565.4 L470 562" fill="none" stroke="#fff" stroke-width="1.1"/><line x1="488.5" y1="559.5" x2="488.5" y2="553.3" stroke="#e6b065" stroke-width="1.3" transform="rotate(0 488.5 559.5)"/><line x1="488.5" y1="559.5" x2="488.5" y2="553.3" stroke="#e6b065" stroke-width="1.3" transform="rotate(45 488.5 559.5)"/><line x1="488.5" y1="559.5" x2="488.5" y2="553.3" stroke="#e6b065" stroke-width="1.3" transform="rotate(90 488.5 559.5)"/><line x1="488.5" y1="559.5" x2="488.5" y2="553.3" stroke="#e6b065" stroke-width="1.3" transform="rotate(135 488.5 559.5)"/><line x1="488.5" y1="559.5" x2="488.5" y2="553.3" stroke="#e6b065" stroke-width="1.3" transform="rotate(180 488.5 559.5)"/><line x1="488.5" y1="559.5" x2="488.5" y2="553.3" stroke="#e6b065" stroke-width="1.3" transform="rotate(225 488.5 559.5)"/><line x1="488.5" y1="559.5" x2="488.5" y2="553.3" stroke="#e6b065" stroke-width="1.3" transform="rotate(270 488.5 559.5)"/><line x1="488.5" y1="559.5" x2="488.5" y2="553.3" stroke="#e6b065" stroke-width="1.3" transform="rotate(315 488.5 559.5)"/><circle cx="488.5" cy="559.5" r="3.1" fill="#fff"/><circle cx="488.5" cy="559.5" r="1.9" fill="none" stroke="#e6b065" stroke-width="1.1"/><circle cx="488.5" cy="559.5" r="0.6" fill="#e6b065"/><circle cx="283.7" cy="588" r="6.1" fill="#fff" stroke="#6e6e6e" stroke-width="1.3"/><circle cx="283.7" cy="588" r="2.8" fill="#8c8c8c"/><rect x="874.5" y="582.5" width="12" height="12" fill="#f5f5f5" stroke="#a9a9a9"/><rect x="876.5" y="584.5" width="8" height="8" fill="none" stroke="#eaeaea"/><rect x="456" y="581" width="14" height="14" rx="2" fill="#d9593a"/><path d="M459 584 L467 592 M467 584 L459 592" stroke="#fff" stroke-width="2"/><line x1="488.5" y1="587.5" x2="488.5" y2="581.3" stroke="#e6b065" stroke-width="1.3" transform="rotate(0 488.5 587.5)"/><line x1="488.5" y1="587.5" x2="488.5" y2="581.3" stroke="#e6b065" stroke-width="1.3" transform="rotate(45 488.5 587.5)"/><line x1="488.5" y1="587.5" x2="488.5" y2="581.3" stroke="#e6b065" stroke-width="1.3" transform="rotate(90 488.5 587.5)"/><line x1="488.5" y1="587.5" x2="488.5" y2="581.3" stroke="#e6b065" stroke-width="1.3" transform="rotate(135 488.5 587.5)"/><line x1="488.5" y1="587.5" x2="488.5" y2="581.3" stroke="#e6b065" stroke-width="1.3" transform="rotate(180 488.5 587.5)"/><line x1="488.5" y1="587.5" x2="488.5" y2="581.3" stroke="#e6b065" stroke-width="1.3" transform="rotate(225 488.5 587.5)"/><line x1="488.5" y1="587.5" x2="488.5" y2="581.3" stroke="#e6b065" stroke-width="1.3" transform="rotate(270 488.5 587.5)"/><line x1="488.5" y1="587.5" x2="488.5" y2="581.3" stroke="#e6b065" stroke-width="1.3" transform="rotate(315 488.5 587.5)"/><circle cx="488.5" cy="587.5" r="3.1" fill="#fff"/><circle cx="488.5" cy="587.5" r="1.9" fill="none" stroke="#e6b065" stroke-width="1.1"/><circle cx="488.5" cy="587.5" r="0.6" fill="#e6b065"/><circle cx="283.7" cy="616" r="6.1" fill="#fff" stroke="#6e6e6e" stroke-width="1.3"/><circle cx="283.7" cy="616" r="2.8" fill="#8c8c8c"/><rect x="874.5" y="610.5" width="12" height="12" fill="#f5f5f5" stroke="#a9a9a9"/><rect x="876.5" y="612.5" width="8" height="8" fill="none" stroke="#eaeaea"/><rect x="456" y="609" width="14" height="14" rx="2" fill="#d9593a"/><path d="M459 612 L467 620 M467 612 L459 620" stroke="#fff" stroke-width="2"/><path d="M481 623 L482.6 618.8 L494.85 607.6 L497.55 610.6 L485.3 621.8 Z" fill="#777"/><path d="M483 619.3 L484.9 621.3 M493.6 608.8 L496 611.4" stroke="#fff" stroke-width="0.8"/><rect x="874.5" y="666.5" width="12" height="12" fill="#f5f5f5" stroke="#a9a9a9"/><rect x="876.5" y="668.5" width="8" height="8" fill="none" stroke="#eaeaea"/><circle cx="464" cy="672" r="8" fill="#3d7ab8"/><circle cx="464" cy="668.3" r="1.5" fill="#fff"/><path d="M462.3 671 H465 V676.3 H466 V677 H462 V676.3 H463 V671.7 H462.3 Z" fill="#fff"/><circle cx="489" cy="672" r="7" fill="#3570b4"/><path d="M486.5 668.2 L492.8 672 L486.5 675.8 Z" fill="#f2f2f2"/><rect x="874.5" y="694.5" width="12" height="12" fill="#f5f5f5" stroke="#a9a9a9"/><rect x="876.5" y="696.5" width="8" height="8" fill="none" stroke="#eaeaea"/><circle cx="464" cy="700" r="8" fill="#3d7ab8"/><circle cx="464" cy="696.3" r="1.5" fill="#fff"/><path d="M462.3 699 H465 V704.3 H466 V705 H462 V704.3 H463 V699.7 H462.3 Z" fill="#fff"/><circle cx="489" cy="700" r="7" fill="#3570b4"/><path d="M486.5 696.2 L492.8 700 L486.5 703.8 Z" fill="#f2f2f2"/><rect x="874.5" y="722.5" width="12" height="12" fill="#f5f5f5" stroke="#a9a9a9"/><rect x="876.5" y="724.5" width="8" height="8" fill="none" stroke="#eaeaea"/><path d="M456 721 H471 V727 H469 V723 H458 V729.5 H463 V731.2 H463.5 V736 H457.5 L456 734.5 Z M458 731.2 V734 H461.5 V731.2 Z" fill="#8447ae" fill-rule="evenodd"/><rect x="460" y="724.2" width="7" height="0.9" fill="#9a9a9a"/><rect x="460" y="726.3" width="6" height="0.9" fill="#9a9a9a"/><circle cx="467.6" cy="731.6" r="4.4" fill="#2f9b6c"/><path d="M465.3 731.8 L467 733.4 L470 730" fill="none" stroke="#fff" stroke-width="1.1"/><path d="M481 735 L482.6 730.8 L494.85 719.6 L497.55 722.6 L485.3 733.8 Z" fill="#777"/><path d="M483 731.3 L484.9 733.3 M493.6 720.8 L496 723.4" stroke="#fff" stroke-width="0.8"/><rect x="874.5" y="750.5" width="12" height="12" fill="#f5f5f5" stroke="#a9a9a9"/><rect x="876.5" y="752.5" width="8" height="8" fill="none" stroke="#eaeaea"/><path d="M456 749 H471 V755 H469 V751 H458 V757.5 H463 V759.2 H463.5 V764 H457.5 L456 762.5 Z M458 759.2 V762 H461.5 V759.2 Z" fill="#8447ae" fill-rule="evenodd"/><rect x="460" y="752.2" width="7" height="0.9" fill="#9a9a9a"/><rect x="460" y="754.3" width="6" height="0.9" fill="#9a9a9a"/><circle cx="467.6" cy="759.6" r="4.4" fill="#2f9b6c"/><path d="M465.3 759.8 L467 761.4 L470 758" fill="none" stroke="#fff" stroke-width="1.1"/><path d="M481 763 L482.6 758.8 L494.85 747.6 L497.55 750.6 L485.3 761.8 Z" fill="#777"/><path d="M483 759.3 L484.9 761.3 M493.6 748.8 L496 751.4" stroke="#fff" stroke-width="0.8"/><rect x="874.5" y="778.5" width="12" height="12" fill="#f5f5f5" stroke="#a9a9a9"/><rect x="876.5" y="780.5" width="8" height="8" fill="none" stroke="#eaeaea"/><path d="M456 777 H471 V783 H469 V779 H458 V785.5 H463 V787.2 H463.5 V792 H457.5 L456 790.5 Z M458 787.2 V790 H461.5 V787.2 Z" fill="#8447ae" fill-rule="evenodd"/><rect x="460" y="780.2" width="7" height="0.9" fill="#9a9a9a"/><rect x="460" y="782.3" width="6" height="0.9" fill="#9a9a9a"/><circle cx="467.6" cy="787.6" r="4.4" fill="#2f9b6c"/><path d="M465.3 787.8 L467 789.4 L470 786" fill="none" stroke="#fff" stroke-width="1.1"/><path d="M481 791 L482.6 786.8 L494.85 775.6 L497.55 778.6 L485.3 789.8 Z" fill="#777"/><path d="M483 787.3 L484.9 789.3 M493.6 776.8 L496 779.4" stroke="#fff" stroke-width="0.8"/><rect x="874.5" y="806.5" width="12" height="12" fill="#f5f5f5" stroke="#a9a9a9"/><rect x="876.5" y="808.5" width="8" height="8" fill="none" stroke="#eaeaea"/><path d="M456 805 H471 V811 H469 V807 H458 V813.5 H463 V815.2 H463.5 V820 H457.5 L456 818.5 Z M458 815.2 V818 H461.5 V815.2 Z" fill="#8447ae" fill-rule="evenodd"/><rect x="460" y="808.2" width="7" height="0.9" fill="#9a9a9a"/><rect x="460" y="810.3" width="6" height="0.9" fill="#9a9a9a"/><circle cx="467.6" cy="815.6" r="4.4" fill="#2f9b6c"/><path d="M465.3 815.8 L467 817.4 L470 814" fill="none" stroke="#fff" stroke-width="1.1"/><path d="M481 819 L482.6 814.8 L494.85 803.6 L497.55 806.6 L485.3 817.8 Z" fill="#777"/><path d="M483 815.3 L484.9 817.3 M493.6 804.8 L496 807.4" stroke="#fff" stroke-width="0.8"/><rect x="874.5" y="834.5" width="12" height="12" fill="#f5f5f5" stroke="#a9a9a9"/><rect x="876.5" y="836.5" width="8" height="8" fill="none" stroke="#eaeaea"/><path d="M456 833 H471 V839 H469 V835 H458 V841.5 H463 V843.2 H463.5 V848 H457.5 L456 846.5 Z M458 843.2 V846 H461.5 V843.2 Z" fill="#8447ae" fill-rule="evenodd"/><rect x="460" y="836.2" width="7" height="0.9" fill="#9a9a9a"/><rect x="460" y="838.3" width="6" height="0.9" fill="#9a9a9a"/><circle cx="467.6" cy="843.6" r="4.4" fill="#2f9b6c"/><path d="M465.3 843.8 L467 845.4 L470 842" fill="none" stroke="#fff" stroke-width="1.1"/><path d="M481 847 L482.6 842.8 L494.85 831.6 L497.55 834.6 L485.3 845.8 Z" fill="#777"/><path d="M483 843.3 L484.9 845.3 M493.6 832.8 L496 835.4" stroke="#fff" stroke-width="0.8"/><rect x="874.5" y="862.5" width="12" height="12" fill="#f5f5f5" stroke="#a9a9a9"/><rect x="876.5" y="864.5" width="8" height="8" fill="none" stroke="#eaeaea"/><path d="M456 861 H471 V867 H469 V863 H458 V869.5 H463 V871.2 H463.5 V876 H457.5 L456 874.5 Z M458 871.2 V874 H461.5 V871.2 Z" fill="#8447ae" fill-rule="evenodd"/><rect x="460" y="864.2" width="7" height="0.9" fill="#9a9a9a"/><rect x="460" y="866.3" width="6" height="0.9" fill="#9a9a9a"/><circle cx="467.6" cy="871.6" r="4.4" fill="#2f9b6c"/><path d="M465.3 871.8 L467 873.4 L470 870" fill="none" stroke="#fff" stroke-width="1.1"/><path d="M481 875 L482.6 870.8 L494.85 859.6 L497.55 862.6 L485.3 873.8 Z" fill="#777"/><path d="M483 871.3 L484.9 873.3 M493.6 860.8 L496 863.4" stroke="#fff" stroke-width="0.8"/><rect x="874.5" y="890.5" width="12" height="12" fill="#f5f5f5" stroke="#a9a9a9"/><rect x="876.5" y="892.5" width="8" height="8" fill="none" stroke="#eaeaea"/><path d="M456 889 H471 V895 H469 V891 H458 V897.5 H463 V899.2 H463.5 V904 H457.5 L456 902.5 Z M458 899.2 V902 H461.5 V899.2 Z" fill="#8447ae" fill-rule="evenodd"/><rect x="460" y="892.2" width="7" height="0.9" fill="#9a9a9a"/><rect x="460" y="894.3" width="6" height="0.9" fill="#9a9a9a"/><circle cx="467.6" cy="899.6" r="4.4" fill="#2f9b6c"/><path d="M465.3 899.8 L467 901.4 L470 898" fill="none" stroke="#fff" stroke-width="1.1"/><path d="M481 903 L482.6 898.8 L494.85 887.6 L497.55 890.6 L485.3 901.8 Z" fill="#777"/><path d="M483 899.3 L484.9 901.3 M493.6 888.8 L496 891.4" stroke="#fff" stroke-width="0.8"/><rect x="874.5" y="918.5" width="12" height="12" fill="#f5f5f5" stroke="#a9a9a9"/><rect x="876.5" y="920.5" width="8" height="8" fill="none" stroke="#eaeaea"/><path d="M456 917 H471 V923 H469 V919 H458 V925.5 H463 V927.2 H463.5 V932 H457.5 L456 930.5 Z M458 927.2 V930 H461.5 V927.2 Z" fill="#8447ae" fill-rule="evenodd"/><rect x="460" y="920.2" width="7" height="0.9" fill="#9a9a9a"/><rect x="460" y="922.3" width="6" height="0.9" fill="#9a9a9a"/><circle cx="467.6" cy="927.6" r="4.4" fill="#2f9b6c"/><path d="M465.3 927.8 L467 929.4 L470 926" fill="none" stroke="#fff" stroke-width="1.1"/><path d="M481 931 L482.6 926.8 L494.85 915.6 L497.55 918.6 L485.3 929.8 Z" fill="#777"/><path d="M483 927.3 L484.9 929.3 M493.6 916.8 L496 919.4" stroke="#fff" stroke-width="0.8"/><rect x="874.5" y="946.5" width="12" height="12" fill="#f5f5f5" stroke="#a9a9a9"/><rect x="876.5" y="948.5" width="8" height="8" fill="none" stroke="#eaeaea"/><path d="M456 945 H471 V951 H469 V947 H458 V953.5 H463 V955.2 H463.5 V960 H457.5 L456 958.5 Z M458 955.2 V958 H461.5 V955.2 Z" fill="#8447ae" fill-rule="evenodd"/><rect x="460" y="948.2" width="7" height="0.9" fill="#9a9a9a"/><rect x="460" y="950.3" width="6" height="0.9" fill="#9a9a9a"/><circle cx="467.6" cy="955.6" r="4.4" fill="#2f9b6c"/><path d="M465.3 955.8 L467 957.4 L470 954" fill="none" stroke="#fff" stroke-width="1.1"/><path d="M481 959 L482.6 954.8 L494.85 943.6 L497.55 946.6 L485.3 957.8 Z" fill="#777"/><path d="M483 955.3 L484.9 957.3 M493.6 944.8 L496 947.4" stroke="#fff" stroke-width="0.8"/><rect x="874.5" y="974.5" width="12" height="12" fill="#f5f5f5" stroke="#a9a9a9"/><rect x="876.5" y="976.5" width="8" height="8" fill="none" stroke="#eaeaea"/><path d="M456 973 H471 V979 H469 V975 H458 V981.5 H463 V983.2 H463.5 V988 H457.5 L456 986.5 Z M458 983.2 V986 H461.5 V983.2 Z" fill="#8447ae" fill-rule="evenodd"/><rect x="460" y="976.2" width="7" height="0.9" fill="#9a9a9a"/><rect x="460" y="978.3" width="6" height="0.9" fill="#9a9a9a"/><circle cx="467.6" cy="983.6" r="4.4" fill="#2f9b6c"/><path d="M465.3 983.8 L467 985.4 L470 982" fill="none" stroke="#fff" stroke-width="1.1"/><path d="M481 987 L482.6 982.8 L494.85 971.6 L497.55 974.6 L485.3 985.8 Z" fill="#777"/><path d="M483 983.3 L484.9 985.3 M493.6 972.8 L496 975.4" stroke="#fff" stroke-width="0.8"/><rect x="874.5" y="1002.5" width="12" height="12" fill="#f5f5f5" stroke="#a9a9a9"/><rect x="876.5" y="1004.5" width="8" height="8" fill="none" stroke="#eaeaea"/><path d="M456 1001 H471 V1007 H469 V1003 H458 V1009.5 H463 V1011.2 H463.5 V1016 H457.5 L456 1014.5 Z M458 1011.2 V1014 H461.5 V1011.2 Z" fill="#8447ae" fill-rule="evenodd"/><rect x="460" y="1004.2" width="7" height="0.9" fill="#9a9a9a"/><rect x="460" y="1006.3" width="6" height="0.9" fill="#9a9a9a"/><circle cx="467.6" cy="1011.6" r="4.4" fill="#2f9b6c"/><path d="M465.3 1011.8 L467 1013.4 L470 1010" fill="none" stroke="#fff" stroke-width="1.1"/><path d="M481 1015 L482.6 1010.8 L494.85 999.6 L497.55 1002.6 L485.3 1013.8 Z" fill="#777"/><path d="M483 1011.3 L484.9 1013.3 M493.6 1000.8 L496 1003.4" stroke="#fff" stroke-width="0.8"/><rect x="874.5" y="1030.5" width="12" height="12" fill="#f5f5f5" stroke="#a9a9a9"/><rect x="876.5" y="1032.5" width="8" height="8" fill="none" stroke="#eaeaea"/><path d="M456 1029 H471 V1035 H469 V1031 H458 V1037.5 H463 V1039.2 H463.5 V1044 H457.5 L456 1042.5 Z M458 1039.2 V1042 H461.5 V1039.2 Z" fill="#8447ae" fill-rule="evenodd"/><rect x="460" y="1032.2" width="7" height="0.9" fill="#9a9a9a"/><rect x="460" y="1034.3" width="6" height="0.9" fill="#9a9a9a"/><circle cx="467.6" cy="1039.6" r="4.4" fill="#2f9b6c"/><path d="M465.3 1039.8 L467 1041.4 L470 1038" fill="none" stroke="#fff" stroke-width="1.1"/><path d="M481 1043 L482.6 1038.8 L494.85 1027.6 L497.55 1030.6 L485.3 1041.8 Z" fill="#777"/><path d="M483 1039.3 L484.9 1041.3 M493.6 1028.8 L496 1031.4" stroke="#fff" stroke-width="0.8"/></svg>
<div class="ab" style="left:699px;top:267px;width:1px;height:772px;background:#0a78d8"></div>
<div class="ab" style="left:865px;top:267px;width:1px;height:772px;background:#0a78d8"></div>
<div class="ab" style="left:1863px;top:235px;width:17px;height:804px;background:linear-gradient(to right,#ececec,#f7f7f7 60%,#f2f2f2)"></div>
<div class="ab" style="left:1880px;top:235px;width:1px;height:820px;background:#cfcfcf"></div>
<div class="ab" style="left:1881px;top:235px;width:7px;height:820px;background:#f9f9f9"></div>
<div class="ab" style="left:1864px;top:256px;width:15px;height:33px;background:#8b8b8b;border-radius:1px"></div>
<div class="ab" style="left:1881px;top:632px;width:6px;height:26px;background:linear-gradient(to right,#d8d8d8,#f0f0f0);border:1px solid #c4c4c4;border-radius:2px"></div>
<svg class="ab" style="left:1863px;top:235px" width="17" height="12"><path d="M3.8 10 L8.5 4.8 L13.2 10 Z" fill="#47536d"/></svg>
<svg class="ab" style="left:1863px;top:1024px" width="17" height="12"><path d="M3.8 3 L8.5 8.2 L13.2 3 Z" fill="#47536d"/></svg>
<div class="ab" style="left:255px;top:1039px;width:1608px;height:17px;background:linear-gradient(to bottom,#ececec,#f8f8f8 60%,#f2f2f2)"></div>
<div class="ab" style="left:1863px;top:1039px;width:17px;height:17px;background:#f0f0f0"></div>
<div class="ab" style="left:273px;top:1041px;width:1242px;height:13px;background:#8b8b8b;border-radius:1px"></div>
<svg class="ab" style="left:255px;top:1039px" width="17" height="17"><path d="M11 4 L5.8 8.5 L11 13 Z" fill="#47536d"/></svg>
<svg class="ab" style="left:1845px;top:1039px" width="17" height="17"><path d="M6 4 L11.2 8.5 L6 13 Z" fill="#47536d"/></svg>
<div class="ab" style="left:255px;top:1056px;width:1633px;height:20px;background:#f5f5f5"></div>
<div class="g" style="left:260px;top:1061px;font-size:12.7px">Rows Loaded: 9,709 | Rows Displayed: 9,709 | Rows Selected: 1</div>
<div class="ab" style="left:254px;top:1076px;width:1635px;height:1px;background:#6e6e6e"></div>
<div class="ab" style="left:0;top:1080px;width:48px;height:1px;background:#3a3a3a"></div>
<div class="ab" style="left:204px;top:1080px;width:133px;height:1px;background:#c4c4c4"></div>
<div class="ab" style="left:337px;top:1080px;width:1584px;height:1px;background:#3a3a3a"></div>
</body></html>
